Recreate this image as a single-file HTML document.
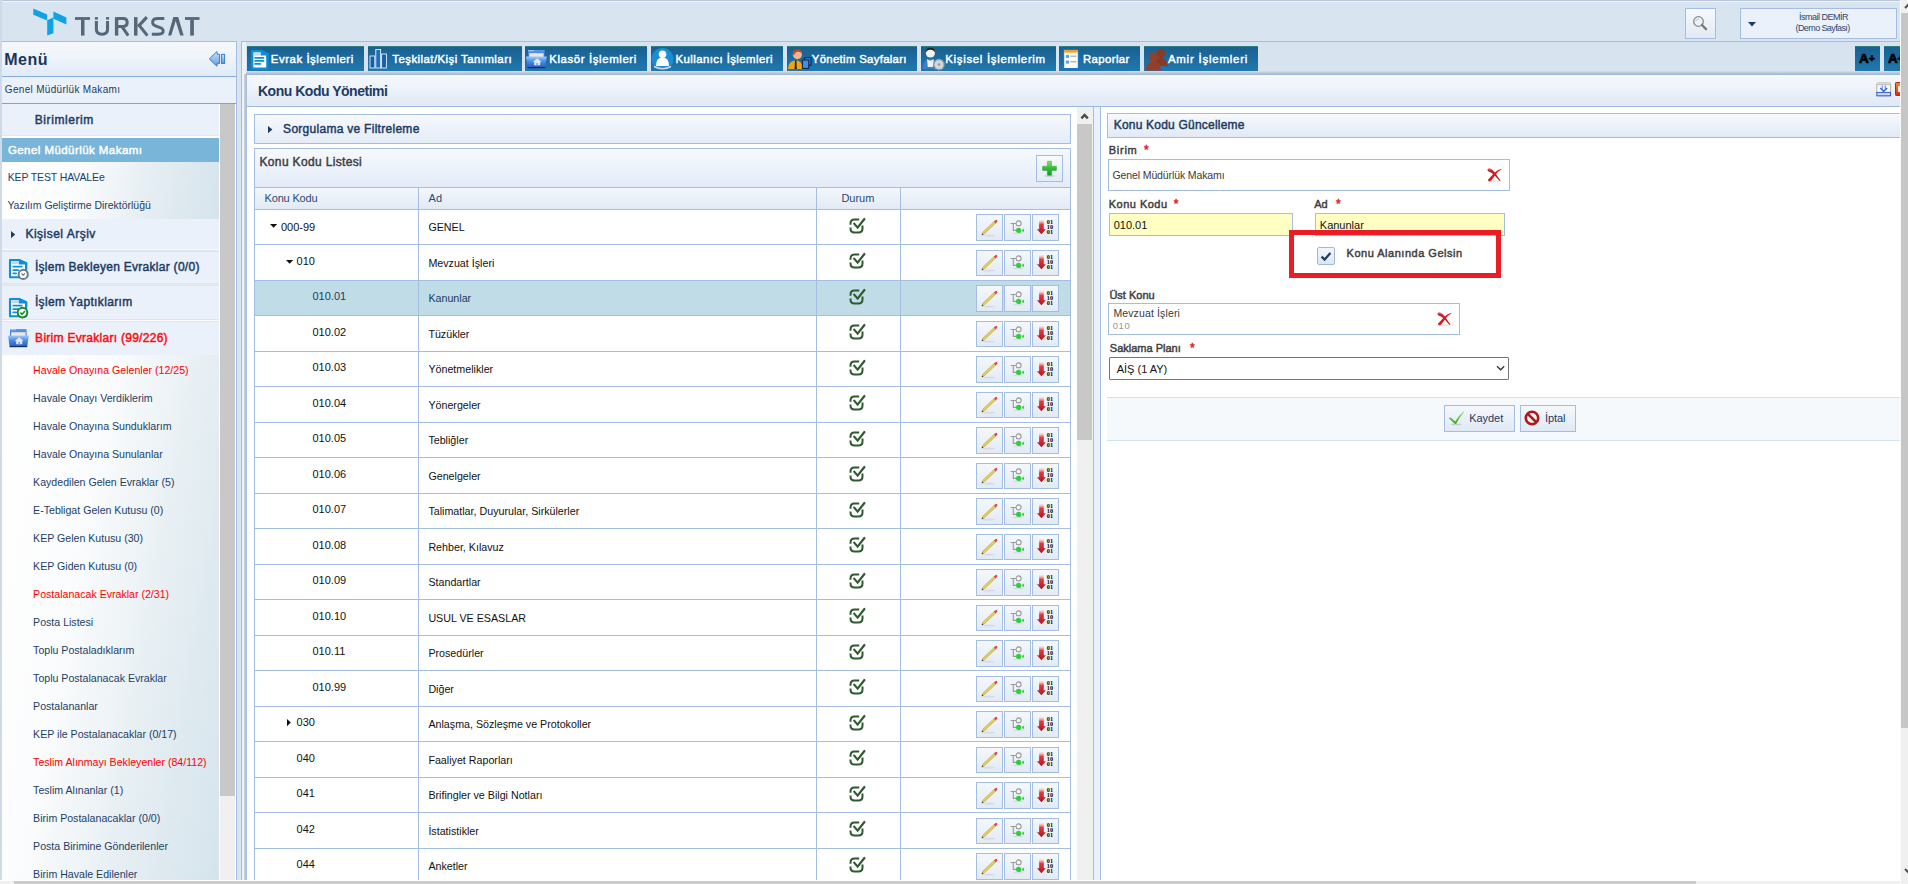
<!DOCTYPE html>
<html><head><meta charset="utf-8"><title>Konu Kodu Yönetimi</title><style>
*{box-sizing:border-box}
html,body{margin:0;padding:0}
body{width:1908px;height:884px;overflow:hidden;position:relative;background:#fff;font-family:"Liberation Sans",sans-serif}
.a{position:absolute}
.t{white-space:nowrap}
svg{overflow:visible}
</style></head><body>
<div class="a" style="left:0px;top:0px;width:1900px;height:42px;background:#d9e4f1"></div>
<div class="a" style="left:0px;top:0px;width:1900px;height:1px;background:#b9c6d9"></div>
<div class="a" style="left:0px;top:1px;width:1900px;height:1px;background:#f2f4f8"></div>
<div class="a" style="left:0px;top:41px;width:1900px;height:1px;background:#a3bde3"></div>
<svg class="a" style="left:33px;top:8px" width="34" height="28" viewBox="0 0 34 28">
<polygon points="0.3,0.6 14.2,6.6 14.2,12.6 0.3,6.8" fill="#0ea3e6"/>
<polygon points="14.2,12.2 20.4,9.6 20.4,25.2 14.2,27.6" fill="#0ea3e6"/>
<polygon points="20.4,3.6 33.4,9.4 33.4,16.6 20.4,10.8" fill="#0ea3e6"/>
</svg>
<svg class="a" style="left:0px;top:0px" width="210" height="42" viewBox="0 0 210 42"><rect x="75.0" y="17.1" width="15.00" height="2.80" fill="#566778"/><rect x="81.0" y="19.9" width="3.50" height="15.70" fill="#566778"/><rect x="94.9" y="17.1" width="3.00" height="2.50" fill="#566778"/><rect x="106.0" y="17.1" width="3.10" height="2.50" fill="#566778"/><path d="M96.4,21 V29.6 Q96.4,34.2 102.0,34.2 Q107.55,34.2 107.55,29.6 V21" stroke="#566778" stroke-width="3.05" fill="none"/><rect x="114.9" y="17.1" width="3.40" height="18.50" fill="#566778"/><path d="M118,18.5 H123.3 Q127.2,18.5 127.2,22.8 Q127.2,26.4 123.3,26.4 H118 M122.2,26.8 L128.2,35.6" stroke="#566778" stroke-width="3" fill="none"/><rect x="134.0" y="17.1" width="3.50" height="18.50" fill="#566778"/><path d="M146.8,17.1 L138,26.6 M139.2,25.4 L147.4,35.6" stroke="#566778" stroke-width="3.1" fill="none"/><path d="M164.3,18.5 H158 Q152.6,18.5 152.6,22.3 Q152.6,25 156,26.2 L160.2,27.6 Q163.2,28.6 163.2,31.1 Q163.2,34.2 158.5,34.2 H151.8" stroke="#566778" stroke-width="2.9" fill="none"/><polygon points="168.1,35.6 173.3,17.1 178.2,17.1 183.7,35.6 180.2,35.6 175.7,20.9 171.3,35.6" fill="#566778"/><rect x="185.0" y="17.1" width="14.50" height="2.80" fill="#566778"/><rect x="190.2" y="19.9" width="3.70" height="15.70" fill="#566778"/></svg>
<div class="a" style="left:1685px;top:8px;width:31px;height:31px;border:1px solid #a3bde3;background:linear-gradient(#f6f9fd,#e2eaf5)"></div>
<svg class="a" style="left:1692px;top:15px" width="17" height="17" viewBox="0 0 17 17"><circle cx="6.5" cy="6.5" r="4.8" fill="#eef3fa" stroke="#8a8a8a" stroke-width="1.3"/><path d="M7.2,4.2 Q4.6,3.9 3.6,6.3" stroke="#b8cbe6" stroke-width="1.2" fill="none"/><path d="M10,10 L14,14.2" stroke="#7a7a7a" stroke-width="2.4" stroke-linecap="round"/></svg>
<div class="a" style="left:1740px;top:8px;width:157px;height:31px;border:1px solid #a3bde3;background:#eaf1fb"></div>
<svg class="a" style="left:1748px;top:22px" width="9" height="5" viewBox="0 0 9 5"><path d="M0,0 H8 L4,4.6 Z" fill="#1d3b63"/></svg>
<span id="t1" class="a t" style="letter-spacing:-0.501px;left:1823.4px;top:12.23px;font-size:9px;line-height:11.7px;color:#2b4670;transform:translateX(-50%);">İsmail DEMİR</span>
<span id="t2" class="a t" style="letter-spacing:-0.609px;left:1822.6000000000001px;top:22.63px;font-size:9px;line-height:11.7px;color:#2b4670;transform:translateX(-50%);">(Demo Sayfası)</span>
<div class="a" style="left:0px;top:0px;width:2px;height:880px;background:#cfdae8"></div>
<div class="a" style="left:2px;top:42px;width:234px;height:34px;background:linear-gradient(#f5f9fd 0%,#eef4fb 45%,#e1eaf6 100%)"></div>
<div class="a" style="left:236px;top:41px;width:1px;height:839px;background:#a3bde3"></div>
<span id="t3" class="a t" style="letter-spacing:0.555px;left:4.2px;top:49.56px;font-size:16px;line-height:20.8px;color:#1b355c;font-weight:bold;">Menü</span>
<svg class="a" style="left:208px;top:51px" width="18" height="17" viewBox="0 0 18 17"><defs><linearGradient id="cg" x1="0" y1="0" x2="0" y2="1"><stop offset="0" stop-color="#c8e6fb"/><stop offset="1" stop-color="#5f98e0"/></linearGradient></defs><path d="M1.3,7.9 L8.8,0.6 L9.4,3.4 H11.6 V12.4 H9.4 L8.8,15.2 Z" fill="url(#cg)" stroke="#3b7ad6" stroke-width="1" stroke-linejoin="miter"/><rect x="13.6" y="3.4" width="3" height="9" fill="url(#cg)" stroke="#3b7ad6" stroke-width="1"/></svg>
<div class="a" style="left:2px;top:76px;width:234px;height:1px;background:#86acdf"></div>
<div class="a" style="left:2px;top:77px;width:234px;height:26px;background:#ebf1fa"></div>
<span id="t4" class="a t" style="letter-spacing:0.312px;left:4.8px;top:83.23px;font-size:10px;line-height:13.0px;color:#1f3a60;">Genel Müdürlük Makamı</span>
<div class="a" style="left:2px;top:103px;width:234px;height:1px;background:#7aa3dc"></div>
<div class="a" style="left:219px;top:104px;width:17px;height:776px;background:#ffffff"></div>
<div class="a" style="left:220px;top:104px;width:15px;height:776px;background:#f0f0f0"></div>
<div class="a" style="left:220px;top:104px;width:15px;height:692px;background:#c8c8c8"></div>
<div class="a" style="left:2px;top:104px;width:217px;height:31px;background:#ebf1fb"></div>
<div class="a" style="left:2px;top:135px;width:217px;height:1px;background:#e6e4f3"></div>
<span id="t5" class="a t" style="letter-spacing:0.567px;left:34.800000000000004px;top:113.24px;font-size:12px;line-height:15.6px;color:#1d3b63;-webkit-text-stroke:0.45px #1d3b63;">Birimlerim</span>
<div class="a" style="left:2px;top:136px;width:217px;height:2px;background:#ffffff"></div>
<div class="a" style="left:2px;top:138px;width:217px;height:81px;background:linear-gradient(100deg,#ffffff 0%,#fbfcfd 35%,#e4edf2 70%,#d5e4ec 100%)"></div>
<div class="a" style="left:2px;top:138px;width:217px;height:24px;background:#79b5d9"></div>
<span id="t6" class="a t" style="letter-spacing:0.439px;left:7.8999999999999995px;top:142.64px;font-size:11.5px;line-height:14.95px;color:#ffffff;-webkit-text-stroke:0.45px #ffffff;">Genel Müdürlük Makamı</span>
<span id="t7" class="a t" style="letter-spacing:-0.114px;left:7.7px;top:171.34px;font-size:10.5px;line-height:13.65px;color:#223f66;">KEP TEST HAVALEe</span>
<span id="t8" class="a t" style="letter-spacing:-0.017px;left:7.3999999999999995px;top:199.14px;font-size:10.5px;line-height:13.65px;color:#223f66;">Yazılım Geliştirme Direktörlüğü</span>
<div class="a" style="left:2px;top:219px;width:217px;height:30px;background:#ebf1fb"></div>
<svg class="a" style="left:11px;top:231px" width="5" height="8" viewBox="0 0 5 8"><path d="M0,0 L4.2,3.6 L0,7.2 Z" fill="#1d3b63"/></svg>
<span id="t9" class="a t" style="letter-spacing:0.491px;left:25.4px;top:226.64px;font-size:12px;line-height:15.6px;color:#1d3b63;-webkit-text-stroke:0.45px #1d3b63;">Kişisel Arşiv</span>
<div class="a" style="left:2px;top:249px;width:217px;height:1px;background:#fdfdff"></div>
<div class="a" style="left:2px;top:250px;width:217px;height:1.5px;background:#e3e3ef"></div>
<div class="a" style="left:2px;top:251.5px;width:217px;height:31.5px;background:#ebf1fb"></div>
<span id="t10" class="a t" style="letter-spacing:0.278px;left:34.900000000000006px;top:259.84px;font-size:12px;line-height:15.6px;color:#1d3b63;-webkit-text-stroke:0.45px #1d3b63;">İşlem Bekleyen Evraklar (0/0)</span>
<div class="a" style="left:2px;top:283px;width:217px;height:1px;background:#e4e2f1"></div>
<div class="a" style="left:2px;top:284px;width:217px;height:1px;background:#e2eaee"></div>
<div class="a" style="left:2px;top:285px;width:217px;height:1px;background:#e6e4f2"></div>
<div class="a" style="left:2px;top:286px;width:217px;height:33px;background:#ebf1fb"></div>
<span id="t11" class="a t" style="letter-spacing:0.365px;left:34.900000000000006px;top:295.04px;font-size:12px;line-height:15.6px;color:#1d3b63;-webkit-text-stroke:0.45px #1d3b63;">İşlem Yaptıklarım</span>
<div class="a" style="left:2px;top:319px;width:217px;height:1px;background:#e4e2f1"></div>
<div class="a" style="left:2px;top:320px;width:217px;height:1px;background:#fbfbfd"></div>
<div class="a" style="left:2px;top:321px;width:217px;height:1px;background:#e6e4f2"></div>
<div class="a" style="left:2px;top:322px;width:217px;height:32.5px;background:#ebf1fb"></div>
<span id="t12" class="a t" style="letter-spacing:0.281px;left:35.1px;top:330.74px;font-size:12px;line-height:15.6px;color:#ff0a0a;-webkit-text-stroke:0.45px #ff0a0a;">Birim Evrakları (99/226)</span>
<div class="a" style="left:2px;top:354.5px;width:217px;height:525.5px;background:linear-gradient(100deg,#ffffff 0%,#fbfcfd 35%,#e4edf2 70%,#d5e4ec 100%)"></div>
<svg class="a" style="left:8px;top:258px" width="22" height="23" viewBox="0 0 22 23"><path d="M2,2 H11.2 L18.1,5.2 V19.2 H2 Z" fill="#fff" stroke="#0f8fd5" stroke-width="2.1" stroke-linejoin="round"/>
<path d="M10.6,1 L19.2,4.6 V10.6 L17.2,10.6 V6.4 L10.6,6.4 Z" fill="#0f8fd5"/>
<rect x="3.4" y="3.2" width="7.4" height="3" fill="#c3d6ee"/>
<rect x="4.4" y="7.8" width="10.2" height="1.8" rx="0.8" fill="#0f8fd5"/><rect x="4.4" y="11.2" width="6.8" height="1.8" rx="0.8" fill="#0f8fd5"/><rect x="4.4" y="14.4" width="4.6" height="1.8" rx="0.8" fill="#0f8fd5"/><circle cx="15.2" cy="16.4" r="4.6" fill="#fff" stroke="#6b7b85" stroke-width="2"/><path d="M13.4,15.4 L15.2,17.1 L17,15.4" stroke="#6b7b85" stroke-width="1.3" fill="none"/></svg>
<svg class="a" style="left:7.5px;top:296.5px" width="22" height="23" viewBox="0 0 22 23"><path d="M2,2 H11.2 L18.1,5.2 V19.2 H2 Z" fill="#fff" stroke="#0f8fd5" stroke-width="2.1" stroke-linejoin="round"/>
<path d="M10.6,1 L19.2,4.6 V10.6 L17.2,10.6 V6.4 L10.6,6.4 Z" fill="#0f8fd5"/>
<rect x="3.4" y="3.2" width="7.4" height="3" fill="#c3d6ee"/>
<rect x="4.4" y="7.8" width="10.2" height="1.8" rx="0.8" fill="#0f8fd5"/><rect x="4.4" y="11.2" width="6.8" height="1.8" rx="0.8" fill="#0f8fd5"/><rect x="4.4" y="14.4" width="4.6" height="1.8" rx="0.8" fill="#0f8fd5"/><circle cx="14.5" cy="15.6" r="4.8" fill="#fff" stroke="#1a8a2e" stroke-width="2"/><path d="M12.4,15.6 L14.1,17.4 L16.9,14" stroke="#1a8a2e" stroke-width="1.6" fill="none"/></svg>
<svg class="a" style="left:8px;top:327.6px" width="22" height="20" viewBox="0 0 22 20"><defs><linearGradient id="fgb2" x1="0" y1="0" x2="0" y2="1"><stop offset="0" stop-color="#5c9cf0"/><stop offset="1" stop-color="#2f6cd0"/></linearGradient><linearGradient id="fgf2" x1="0" y1="0" x2="0" y2="1"><stop offset="0" stop-color="#9cc8ff"/><stop offset="0.45" stop-color="#4a8ce8"/><stop offset="1" stop-color="#2a5cc0"/></linearGradient></defs><rect x="2" y="1" width="16.6" height="8" fill="url(#fgb2)"/><rect x="2.4" y="1.2" width="5.5" height="1" fill="#a8ccf8"/><rect x="3.2" y="4.2" width="14.4" height="4.6" fill="#efe8da"/><path d="M0,7.6 H20.8 L19.2,18.4 H1.6 Z" fill="url(#fgf2)"/><rect x="1.6" y="18" width="17.6" height="1.2" fill="#10306a"/><path d="M11.2,9.2 L15.6,13 H14.2 V16.2 H8.2 V13 H6.8 Z" fill="#dce9fb"/><rect x="10.4" y="14" width="1.6" height="2.2" fill="#6a9ee8"/></svg>
<span id="t13" class="a t" style="left:33.1px;top:364.44px;font-size:10.6px;line-height:13.78px;color:#ff0000;">Havale Onayına Gelenler (12/25)</span>
<span id="t14" class="a t" style="left:33.1px;top:392.44px;font-size:10.6px;line-height:13.78px;color:#223f66;">Havale Onayı Verdiklerim</span>
<span id="t15" class="a t" style="left:33.1px;top:420.44px;font-size:10.6px;line-height:13.78px;color:#223f66;">Havale Onayına Sunduklarım</span>
<span id="t16" class="a t" style="left:33.1px;top:448.44px;font-size:10.6px;line-height:13.78px;color:#223f66;">Havale Onayına Sunulanlar</span>
<span id="t17" class="a t" style="left:33.1px;top:476.44px;font-size:10.6px;line-height:13.78px;color:#223f66;">Kaydedilen Gelen Evraklar (5)</span>
<span id="t18" class="a t" style="left:33.1px;top:504.44px;font-size:10.6px;line-height:13.78px;color:#223f66;">E-Tebligat Gelen Kutusu (0)</span>
<span id="t19" class="a t" style="left:33.1px;top:532.44px;font-size:10.6px;line-height:13.78px;color:#223f66;">KEP Gelen Kutusu (30)</span>
<span id="t20" class="a t" style="left:33.1px;top:560.44px;font-size:10.6px;line-height:13.78px;color:#223f66;">KEP Giden Kutusu (0)</span>
<span id="t21" class="a t" style="left:33.1px;top:588.44px;font-size:10.6px;line-height:13.78px;color:#ff0000;">Postalanacak Evraklar (2/31)</span>
<span id="t22" class="a t" style="left:33.1px;top:616.44px;font-size:10.6px;line-height:13.78px;color:#223f66;">Posta Listesi</span>
<span id="t23" class="a t" style="left:33.1px;top:644.44px;font-size:10.6px;line-height:13.78px;color:#223f66;">Toplu Postaladıklarım</span>
<span id="t24" class="a t" style="left:33.1px;top:672.44px;font-size:10.6px;line-height:13.78px;color:#223f66;">Toplu Postalanacak Evraklar</span>
<span id="t25" class="a t" style="left:33.1px;top:700.44px;font-size:10.6px;line-height:13.78px;color:#223f66;">Postalananlar</span>
<span id="t26" class="a t" style="left:33.1px;top:728.44px;font-size:10.6px;line-height:13.78px;color:#223f66;">KEP ile Postalanacaklar (0/17)</span>
<span id="t27" class="a t" style="left:33.1px;top:756.44px;font-size:10.6px;line-height:13.78px;color:#ff0000;">Teslim Alınmayı Bekleyenler (84/112)</span>
<span id="t28" class="a t" style="left:33.1px;top:784.44px;font-size:10.6px;line-height:13.78px;color:#223f66;">Teslim Alınanlar (1)</span>
<span id="t29" class="a t" style="left:33.1px;top:812.44px;font-size:10.6px;line-height:13.78px;color:#223f66;">Birim Postalanacaklar (0/0)</span>
<span id="t30" class="a t" style="left:33.1px;top:840.44px;font-size:10.6px;line-height:13.78px;color:#223f66;">Posta Birimine Gönderilenler</span>
<span id="t31" class="a t" style="left:33.1px;top:868.44px;font-size:10.6px;line-height:13.78px;color:#223f66;">Birim Havale Edilenler</span>
<div class="a" style="left:237px;top:41px;width:4px;height:839px;background:#d9e4f1"></div>
<div class="a" style="left:241px;top:41px;width:1px;height:839px;background:#a3bde3"></div>
<div class="a" style="left:242px;top:42px;width:1658px;height:29px;background:#d8e3f0"></div>
<div class="a" style="left:242px;top:42px;width:4px;height:838px;background:#edf2f8"></div>
<div class="a" style="left:246px;top:71px;width:1654px;height:3px;background:linear-gradient(#dcdee4,#b2bac6)"></div>
<div class="a" style="left:247px;top:74px;width:1653px;height:1px;background:#a0bbe0"></div>
<div class="a" style="left:244px;top:74px;width:2px;height:806px;background:linear-gradient(90deg,#d4d8de,#b4bac4)"></div>
<div class="a" style="left:246px;top:74px;width:1px;height:806px;background:#a8c0e0"></div>
<div class="a" style="left:246.5px;top:45.5px;width:117.5px;height:25.3px;background:linear-gradient(#1a5f90,#1f79ae);border-top:1px solid #2f7f86"></div>
<span id="t32" class="a t" style="letter-spacing:0.554px;left:270.8px;top:51.54px;font-size:11.4px;line-height:14.82px;color:#ffffff;-webkit-text-stroke:0.45px #ffffff;">Evrak İşlemleri</span>
<div class="a" style="left:367.7px;top:45.5px;width:154.3px;height:25.3px;background:linear-gradient(#1a5f90,#1f79ae);border-top:1px solid #2f7f86"></div>
<span id="t33" class="a t" style="letter-spacing:0.452px;left:392.3px;top:51.54px;font-size:11.4px;line-height:14.82px;color:#ffffff;-webkit-text-stroke:0.45px #ffffff;">Teşkilat/Kişi Tanımları</span>
<div class="a" style="left:524.5px;top:45.5px;width:122.5px;height:25.3px;background:linear-gradient(#1a5f90,#1f79ae);border-top:1px solid #2f7f86"></div>
<span id="t34" class="a t" style="letter-spacing:0.615px;left:549.2px;top:51.54px;font-size:11.4px;line-height:14.82px;color:#ffffff;-webkit-text-stroke:0.45px #ffffff;">Klasör İşlemleri</span>
<div class="a" style="left:650.8px;top:45.5px;width:132.6px;height:25.3px;background:linear-gradient(#1a5f90,#1f79ae);border-top:1px solid #2f7f86"></div>
<span id="t35" class="a t" style="letter-spacing:0.439px;left:675.4000000000001px;top:51.54px;font-size:11.4px;line-height:14.82px;color:#ffffff;-webkit-text-stroke:0.45px #ffffff;">Kullanıcı İşlemleri</span>
<div class="a" style="left:786.8px;top:45.5px;width:130.2px;height:25.3px;background:linear-gradient(#1a5f90,#1f79ae);border-top:1px solid #2f7f86"></div>
<span id="t36" class="a t" style="letter-spacing:0.300px;left:811.8000000000001px;top:51.54px;font-size:11.4px;line-height:14.82px;color:#ffffff;-webkit-text-stroke:0.45px #ffffff;">Yönetim Sayfaları</span>
<div class="a" style="left:920.8px;top:45.5px;width:135.2px;height:25.3px;background:linear-gradient(#1a5f90,#1f79ae);border-top:1px solid #2f7f86"></div>
<span id="t37" class="a t" style="letter-spacing:0.695px;left:945.3000000000001px;top:51.54px;font-size:11.4px;line-height:14.82px;color:#ffffff;-webkit-text-stroke:0.45px #ffffff;">Kişisel İşlemlerim</span>
<div class="a" style="left:1059px;top:45.5px;width:81px;height:25.3px;background:linear-gradient(#1a5f90,#1f79ae);border-top:1px solid #2f7f86"></div>
<span id="t38" class="a t" style="letter-spacing:0.377px;left:1083.0px;top:51.54px;font-size:11.4px;line-height:14.82px;color:#ffffff;-webkit-text-stroke:0.45px #ffffff;">Raporlar</span>
<div class="a" style="left:1143.6px;top:45.5px;width:114.4px;height:25.3px;background:linear-gradient(#1a5f90,#1f79ae);border-top:1px solid #2f7f86"></div>
<span id="t39" class="a t" style="letter-spacing:0.808px;left:1167.8999999999999px;top:51.54px;font-size:11.4px;line-height:14.82px;color:#ffffff;-webkit-text-stroke:0.45px #ffffff;">Amir İşlemleri</span>
<svg class="a" style="left:249.5px;top:48.5px" width="20" height="22" viewBox="0 0 20 22"><path d="M2.2,2.2 H11.4 L17.4,5 V18.6 Q17.4,19.6 16.4,19.6 H3.2 Q2.2,19.6 2.2,18.6 Z" fill="#fff" stroke="#0d8fd8" stroke-width="2.4" stroke-linejoin="round"/><path d="M10.6,0.9 L18.7,4.2 V9.2 L16.2,9.2 V6.4 L10.6,6.4 Z" fill="#0d8fd8"/><rect x="3.4" y="3.4" width="7.2" height="3.2" fill="#c6d8ee"/><rect x="4.2" y="8" width="10.2" height="1.8" rx="0.9" fill="#0d8fd8"/><rect x="4.2" y="11" width="10.2" height="1.8" rx="0.9" fill="#0d8fd8"/><rect x="4.2" y="14" width="7" height="1.8" rx="0.9" fill="#0d8fd8"/></svg>
<svg class="a" style="left:369px;top:48px" width="19" height="21" viewBox="0 0 19 21"><rect x="1" y="8" width="4.8" height="12" fill="#1460a8" stroke="#e8eef6" stroke-width="0.9"/><rect x="6.8" y="1.5" width="4.8" height="18.5" fill="#1a6fc0" stroke="#e8eef6" stroke-width="0.9"/><rect x="12.6" y="6" width="4.8" height="14" fill="#1460a8" stroke="#e8eef6" stroke-width="0.9"/></svg>
<svg class="a" style="left:526px;top:49.2px" width="22" height="20" viewBox="0 0 22 20"><defs><linearGradient id="fgb" x1="0" y1="0" x2="0" y2="1"><stop offset="0" stop-color="#5c9cf0"/><stop offset="1" stop-color="#2f6cd0"/></linearGradient><linearGradient id="fgf" x1="0" y1="0" x2="0" y2="1"><stop offset="0" stop-color="#9cc8ff"/><stop offset="0.45" stop-color="#4a8ce8"/><stop offset="1" stop-color="#2a5cc0"/></linearGradient></defs><rect x="2" y="1" width="16.6" height="8" fill="url(#fgb)"/><rect x="2.4" y="1.2" width="5.5" height="1" fill="#a8ccf8"/><rect x="3.2" y="4.2" width="14.4" height="4.6" fill="#efe8da"/><path d="M0,7.6 H20.8 L19.2,18.4 H1.6 Z" fill="url(#fgf)"/><rect x="1.6" y="18" width="17.6" height="1.2" fill="#10306a"/><path d="M11.2,9.2 L15.6,13 H14.2 V16.2 H8.2 V13 H6.8 Z" fill="#dce9fb"/><rect x="10.4" y="14" width="1.6" height="2.2" fill="#6a9ee8"/></svg>
<svg class="a" style="left:651px;top:48px" width="24" height="23" viewBox="0 0 24 23"><circle cx="11.5" cy="11" r="11" fill="#1a8ed0"/><circle cx="11.5" cy="6.2" r="3.8" fill="#fff"/><path d="M5,18 Q5,9.6 11.5,9.6 Q18,9.6 18,18 Z" fill="#fff"/><path d="M3,18.5 Q11.5,23 20,18.5" stroke="#cfd8df" stroke-width="1.6" fill="none"/></svg>
<svg class="a" style="left:787px;top:48px" width="25" height="23" viewBox="0 0 25 23"><path d="M1,21 Q1.4,12.6 8.6,12.4 Q15.6,12.6 16,21 Z" fill="#f0a414"/><path d="M8,12.6 H9.4 L9.8,21 H7.6 Z" fill="#222"/><circle cx="10.4" cy="6.6" r="4.6" fill="#f2b48e"/><path d="M5.8,6 Q5.8,1.4 10.4,1.4 Q15,1.4 15.2,5.4 Q13.4,3.6 11,3.8 Q8,4 7,7.6 Z" fill="#c8481e"/><rect x="17.6" y="9.6" width="6.4" height="7.6" fill="#2d7fd4" stroke="#0c2040" stroke-width="1"/><rect x="15.4" y="12" width="6.4" height="8.4" fill="#3b90e6" stroke="#0c2040" stroke-width="1"/></svg>
<svg class="a" style="left:922px;top:47px" width="25" height="24" viewBox="0 0 25 24"><circle cx="8.4" cy="6" r="4.6" fill="#f2f2f2"/><path d="M3.8,5.2 Q4,0.8 8.4,0.8 Q12.8,0.8 13,5.2 Q11,2.6 8.4,2.8 Q5.8,2.6 3.8,5.2 Z" fill="#222"/><path d="M0.5,22 Q0.8,11.8 8.4,11.6 Q15.8,11.8 16,22 Z" fill="#3b7fc8"/><path d="M5,12 Q8.4,15 11.8,12 L11,20 H5.8 Z" fill="#f0f0f0"/><circle cx="17" cy="17.6" r="5" fill="#d4d8dc" stroke="#9aa0a8" stroke-width="1.6" stroke-dasharray="1.6 1"/><circle cx="17" cy="17.6" r="1.4" fill="#9aa0a8"/></svg>
<svg class="a" style="left:1062px;top:48px" width="18" height="22" viewBox="0 0 18 22"><path d="M1,0.8 H14 L17,3.8 V21 H1 Z" fill="#1c74c8"/><rect x="2.2" y="2" width="13.6" height="18" fill="#fdfaf0"/><rect x="2.2" y="2" width="13.6" height="2.6" fill="#f3a12c"/><rect x="4" y="7" width="3" height="3" fill="#5aa0e8"/><rect x="8.4" y="7.6" width="6" height="1.2" fill="#9ab"/><rect x="4" y="12.6" width="3" height="3" fill="#5aa0e8"/><rect x="8.4" y="13.2" width="6" height="1.2" fill="#9ab"/></svg>
<svg class="a" style="left:1145px;top:48px" width="24" height="23" viewBox="0 0 24 23"><circle cx="15.6" cy="5.4" r="4.4" fill="#8a3a22"/><path d="M9,18 Q9.4,10.2 15.6,10 Q22,10.2 22.3,18 Z" fill="#8a3a22"/><circle cx="8.4" cy="9" r="4.6" fill="#93402a"/><path d="M0.8,22.5 Q1,13.8 8.4,13.6 Q15.8,13.8 16,22.5 Z" fill="#93402a"/></svg>
<div class="a" style="left:1854.8px;top:45.5px;width:25.2px;height:25.3px;background:linear-gradient(#1a5f90,#1f79ae);border-top:1px solid #2f7f86"></div>
<span id="t40" class="a t" style="left:1859.1000000000001px;top:50.35px;font-size:13.5px;line-height:17.55px;color:#000;font-weight:bold;-webkit-text-stroke:0.7px #000">A</span>
<span id="t41" class="a t" style="left:1868.8px;top:52.34px;font-size:10.5px;line-height:13.65px;color:#000;font-weight:bold;-webkit-text-stroke:0.6px #000">+</span>
<div class="a" style="left:1883.7px;top:45.5px;width:17px;height:25.3px;background:linear-gradient(#1a5f90,#1f79ae);border-top:1px solid #2f7f86"></div>
<span id="t42" class="a t" style="left:1887.9px;top:50.35px;font-size:13.5px;line-height:17.55px;color:#000;font-weight:bold;-webkit-text-stroke:0.7px #000">A</span>
<span id="t43" class="a t" style="left:1897.6000000000001px;top:52.34px;font-size:10.5px;line-height:13.65px;color:#000;font-weight:bold;-webkit-text-stroke:0.6px #000">+</span>
<div class="a" style="left:247px;top:75px;width:1653px;height:31px;background:linear-gradient(#f6f9fd 0%,#eff4fb 40%,#e4ecf7 75%,#e2eaf6 100%)"></div>
<span id="t44" class="a t" style="letter-spacing:-0.488px;left:258.0px;top:82.05px;font-size:14px;line-height:18.2px;color:#1d3b63;font-weight:bold;">Konu Kodu Yönetimi</span>
<div class="a" style="left:247px;top:106px;width:1653px;height:1px;background:#9cb8de"></div>
<div class="a" style="left:247px;top:107px;width:1653px;height:773px;background:#ffffff"></div>
<svg class="a" style="left:1876px;top:82px" width="16" height="15" viewBox="0 0 16 15"><defs><linearGradient id="xg" x1="0" y1="0" x2="0" y2="1"><stop offset="0" stop-color="#e8e8e8"/><stop offset="1" stop-color="#b8b8b8"/></linearGradient></defs><rect x="0.8" y="0.8" width="13.8" height="13" rx="1.2" fill="#fafafa" stroke="#a8a8a8" stroke-width="0.9"/><rect x="0.8" y="0.8" width="13.8" height="2.4" rx="1" fill="url(#xg)"/><path d="M6.2,3.6 V7.6 M9.2,3.6 V7.6" stroke="#3a6ee0" stroke-width="0.9"/><path d="M4.2,6 L7.7,9.4 L11.2,6" stroke="#3a6ee0" stroke-width="1.5" fill="none"/><rect x="0.9" y="10.4" width="13.6" height="3.4" fill="#c8d6f8" stroke="#2d5ed8" stroke-width="1"/></svg>
<div class="a" style="left:1895.2px;top:82px;width:4.8px;height:13.8px;background:linear-gradient(#f4902c,#d8281a);border-radius:2px 0 0 2px;border:0.6px solid #c02010;border-right:none"></div>
<div class="a" style="left:1898.4px;top:86px;width:1.6px;height:6px;background:#fbe6c8"></div>
<div class="a" style="left:254px;top:114px;width:817px;height:30px;border:1px solid #a3bde3;background:linear-gradient(#f6f9fd,#e4ecf7)"></div>
<svg class="a" style="left:268px;top:126px" width="5" height="8" viewBox="0 0 5 8"><path d="M0,0 L4.4,3.6 L0,7.2 Z" fill="#1d3b63"/></svg>
<span id="t45" class="a t" style="letter-spacing:0.280px;left:283.09999999999997px;top:121.94px;font-size:12px;line-height:15.6px;color:#1d3b63;-webkit-text-stroke:0.45px #1d3b63;">Sorgulama ve Filtreleme</span>
<div class="a" style="left:254px;top:148px;width:817px;height:740px;border:1px solid #a3bde3;background:#fff"></div>
<div class="a" style="left:255px;top:149px;width:815px;height:38px;background:linear-gradient(#f6f9fd 0%,#eef3fb 45%,#e3ebf6 100%)"></div>
<span id="t46" class="a t" style="letter-spacing:0.345px;left:259.5px;top:154.74px;font-size:12px;line-height:15.6px;color:#404040;-webkit-text-stroke:0.45px #404040;">Konu Kodu Listesi</span>
<div class="a" style="left:1036px;top:155px;width:27px;height:27px;border:1px solid #a3bde3;background:linear-gradient(#f6f9fd,#e3ebf6)"></div>
<svg class="a" style="left:1039.5px;top:158.5px" width="20" height="20" viewBox="0 0 20 20"><defs><linearGradient id="plg" x1="0" y1="0" x2="0" y2="1"><stop offset="0" stop-color="#7ee07e"/><stop offset="0.5" stop-color="#2fbf35"/><stop offset="1" stop-color="#169a1e"/></linearGradient></defs>
<ellipse cx="9.5" cy="16.9" rx="5" ry="0.9" fill="#000" opacity="0.15"/>
<path d="M7.4,2.8 Q7.4,2.3 7.9,2.3 H11.1 Q11.6,2.3 11.6,2.8 V7.2 H16 Q16.5,7.2 16.5,7.7 V10.9 Q16.5,11.4 16,11.4 H11.6 V15.8 Q11.6,16.3 11.1,16.3 H7.9 Q7.4,16.3 7.4,15.8 V11.4 H3 Q2.5,11.4 2.5,10.9 V7.7 Q2.5,7.2 3,7.2 H7.4 Z" fill="url(#plg)" stroke="#1f8f25" stroke-width="0.4"/></svg>
<div class="a" style="left:255px;top:187px;width:815px;height:1px;background:#a3bde3"></div>
<div class="a" style="left:255px;top:188px;width:815px;height:21px;background:linear-gradient(#f3f7fc,#e2eaf5)"></div>
<div class="a" style="left:255px;top:209px;width:815px;height:1px;background:#a3bde3"></div>
<div class="a" style="left:418px;top:187px;width:1px;height:693px;background:#a3bde3"></div>
<div class="a" style="left:816px;top:187px;width:1px;height:693px;background:#a3bde3"></div>
<div class="a" style="left:900px;top:187px;width:1px;height:693px;background:#a3bde3"></div>
<span id="t47" class="a t" style="letter-spacing:-0.160px;left:264.5px;top:191.04px;font-size:11px;line-height:14.3px;color:#2b4a72;">Konu Kodu</span>
<span id="t48" class="a t" style="left:428.59999999999997px;top:191.04px;font-size:11px;line-height:14.3px;color:#2b4a72;">Ad</span>
<span id="t49" class="a t" style="left:857.9000000000001px;top:191.04px;font-size:11px;line-height:14.3px;color:#2b4a72;transform:translateX(-50%);">Durum</span>
<div class="a" style="left:255px;top:244px;width:815px;height:1px;background:#a3bde3"></div>
<span id="t50" class="a t" style="left:280.9px;top:220.34px;font-size:11px;line-height:14.3px;color:#111;">000-99</span>
<span id="t51" class="a t" style="left:428.4px;top:221.34px;font-size:10.7px;line-height:13.91px;color:#111;">GENEL</span>
<svg class="a" style="left:270px;top:224.0px" width="8" height="4" viewBox="0 0 8 4"><path d="M0,0 H7.2 L3.6,3.8 Z" fill="#111"/></svg>
<svg class="a" style="left:849.2px;top:217.8px" width="17" height="16" viewBox="0 0 17 16"><path d="M1.5,6.8 V5.5 Q1.5,1.5 5.5,1.5 H10.2 M13.5,7.5 V10.5 Q13.5,14.5 9.5,14.5 H5.5 Q1.5,14.5 1.5,10.5 V9.5" stroke="#2d5a2f" stroke-width="2" fill="none"/>
<path d="M5.2,5.6 L8.6,9.6 L15.4,1" stroke="#2d5a2f" stroke-width="2.2" fill="none" stroke-linecap="round"/></svg>
<div class="a" style="left:976.2px;top:214.3px;width:26.6px;height:26.6px;border:1px solid #a3bde3;background:linear-gradient(#f4f8fc,#e2eaf5)"></div>
<div class="a" style="left:1004.2px;top:214.3px;width:26.6px;height:26.6px;border:1px solid #a3bde3;background:linear-gradient(#f4f8fc,#e2eaf5)"></div>
<div class="a" style="left:1032.2px;top:214.3px;width:26.6px;height:26.6px;border:1px solid #a3bde3;background:linear-gradient(#f4f8fc,#e2eaf5)"></div>
<svg class="a" style="left:977.5px;top:215.5px" width="24" height="24" viewBox="0 0 24 24"><defs><linearGradient id="pg" x1="0" y1="0" x2="1" y2="1"><stop offset="0" stop-color="#f8ec8c"/><stop offset="1" stop-color="#d0b030"/></linearGradient></defs>
<ellipse cx="10.5" cy="19.6" rx="7" ry="1" fill="#000" opacity="0.07"/>
<path d="M3.8,19 L5,16 L16.4,5.2 L18,6.8 L6.6,17.6 Z" fill="url(#pg)" stroke="#b09020" stroke-width="0.5"/>
<path d="M3.8,19 L4.4,17.4 L5.4,18.4 Z" fill="#111"/>
<path d="M16,5.6 L17.4,4.2 Q18.6,3.4 19.2,4.4 Q19.8,5.4 18.8,6.2 L17.4,7.6 Z" fill="#e8414a"/></svg>
<svg class="a" style="left:1005.5px;top:217.8px" width="24" height="24" viewBox="0 0 24 24"><path d="M4.6,5.5 H10 M7.3,5.5 V12.4 H10.5" stroke="#9a9a9a" stroke-width="1.1" fill="none"/>
<circle cx="12.6" cy="5.4" r="2.5" fill="#f4f4f4" stroke="#9a9a9a" stroke-width="1.1"/>
<ellipse cx="12" cy="15.4" rx="5" ry="0.9" fill="#000" opacity="0.07"/>
<circle cx="12.6" cy="12.4" r="2.7" fill="#2fcf3a"/>
<path d="M17.6,11 L16,12.4 L17.6,13.8 Z" fill="#2fbf3a" stroke="#2fbf3a" stroke-width="0.6"/></svg>
<svg class="a" style="left:1032px;top:214.6px" width="24" height="24" viewBox="0 0 24 24"><defs><linearGradient id="eg" x1="0" y1="0" x2="0" y2="1"><stop offset="0" stop-color="#fff" stop-opacity="0.3"/><stop offset="0.35" stop-color="#e23b40"/><stop offset="1" stop-color="#b0141a"/></linearGradient></defs>
<path d="M7.1,4 H11.8 V14.3 H13.9 L9.4,19.2 L4.9,14.3 H7.1 Z" fill="url(#eg)"/>
<text x="14.8" y="9.4" font-family="Liberation Serif" font-weight="bold" font-size="6.2" fill="#000">01</text>
<text x="14.8" y="14.4" font-family="Liberation Serif" font-weight="bold" font-size="6.2" fill="#000">10</text>
<text x="14.8" y="19.3" font-family="Liberation Serif" font-weight="bold" font-size="6.2" fill="#000">01</text></svg>
<div class="a" style="left:255px;top:280px;width:815px;height:1px;background:#a3bde3"></div>
<span id="t52" class="a t" style="left:296.59999999999997px;top:253.84px;font-size:11px;line-height:14.3px;color:#111;">010</span>
<span id="t53" class="a t" style="left:428.4px;top:256.84px;font-size:10.7px;line-height:13.91px;color:#111;">Mevzuat İşleri</span>
<svg class="a" style="left:286.2px;top:259.5px" width="8" height="4" viewBox="0 0 8 4"><path d="M0,0 H7.2 L3.6,3.8 Z" fill="#111"/></svg>
<svg class="a" style="left:849.2px;top:253.3px" width="17" height="16" viewBox="0 0 17 16"><path d="M1.5,6.8 V5.5 Q1.5,1.5 5.5,1.5 H10.2 M13.5,7.5 V10.5 Q13.5,14.5 9.5,14.5 H5.5 Q1.5,14.5 1.5,10.5 V9.5" stroke="#2d5a2f" stroke-width="2" fill="none"/>
<path d="M5.2,5.6 L8.6,9.6 L15.4,1" stroke="#2d5a2f" stroke-width="2.2" fill="none" stroke-linecap="round"/></svg>
<div class="a" style="left:976.2px;top:249.8px;width:26.6px;height:26.6px;border:1px solid #a3bde3;background:linear-gradient(#f4f8fc,#e2eaf5)"></div>
<div class="a" style="left:1004.2px;top:249.8px;width:26.6px;height:26.6px;border:1px solid #a3bde3;background:linear-gradient(#f4f8fc,#e2eaf5)"></div>
<div class="a" style="left:1032.2px;top:249.8px;width:26.6px;height:26.6px;border:1px solid #a3bde3;background:linear-gradient(#f4f8fc,#e2eaf5)"></div>
<svg class="a" style="left:977.5px;top:251.0px" width="24" height="24" viewBox="0 0 24 24"><defs><linearGradient id="pg" x1="0" y1="0" x2="1" y2="1"><stop offset="0" stop-color="#f8ec8c"/><stop offset="1" stop-color="#d0b030"/></linearGradient></defs>
<ellipse cx="10.5" cy="19.6" rx="7" ry="1" fill="#000" opacity="0.07"/>
<path d="M3.8,19 L5,16 L16.4,5.2 L18,6.8 L6.6,17.6 Z" fill="url(#pg)" stroke="#b09020" stroke-width="0.5"/>
<path d="M3.8,19 L4.4,17.4 L5.4,18.4 Z" fill="#111"/>
<path d="M16,5.6 L17.4,4.2 Q18.6,3.4 19.2,4.4 Q19.8,5.4 18.8,6.2 L17.4,7.6 Z" fill="#e8414a"/></svg>
<svg class="a" style="left:1005.5px;top:253.3px" width="24" height="24" viewBox="0 0 24 24"><path d="M4.6,5.5 H10 M7.3,5.5 V12.4 H10.5" stroke="#9a9a9a" stroke-width="1.1" fill="none"/>
<circle cx="12.6" cy="5.4" r="2.5" fill="#f4f4f4" stroke="#9a9a9a" stroke-width="1.1"/>
<ellipse cx="12" cy="15.4" rx="5" ry="0.9" fill="#000" opacity="0.07"/>
<circle cx="12.6" cy="12.4" r="2.7" fill="#2fcf3a"/>
<path d="M17.6,11 L16,12.4 L17.6,13.8 Z" fill="#2fbf3a" stroke="#2fbf3a" stroke-width="0.6"/></svg>
<svg class="a" style="left:1032px;top:250.1px" width="24" height="24" viewBox="0 0 24 24"><defs><linearGradient id="eg" x1="0" y1="0" x2="0" y2="1"><stop offset="0" stop-color="#fff" stop-opacity="0.3"/><stop offset="0.35" stop-color="#e23b40"/><stop offset="1" stop-color="#b0141a"/></linearGradient></defs>
<path d="M7.1,4 H11.8 V14.3 H13.9 L9.4,19.2 L4.9,14.3 H7.1 Z" fill="url(#eg)"/>
<text x="14.8" y="9.4" font-family="Liberation Serif" font-weight="bold" font-size="6.2" fill="#000">01</text>
<text x="14.8" y="14.4" font-family="Liberation Serif" font-weight="bold" font-size="6.2" fill="#000">10</text>
<text x="14.8" y="19.3" font-family="Liberation Serif" font-weight="bold" font-size="6.2" fill="#000">01</text></svg>
<div class="a" style="left:255px;top:281px;width:815px;height:34px;background:#c0dde7"></div>
<div class="a" style="left:255px;top:315px;width:815px;height:1px;background:#a3bde3"></div>
<span id="t54" class="a t" style="left:312.5px;top:289.34px;font-size:11px;line-height:14.3px;color:#1d3b63;">010.01</span>
<span id="t55" class="a t" style="left:428.4px;top:292.34px;font-size:10.7px;line-height:13.91px;color:#1d3b63;">Kanunlar</span>
<svg class="a" style="left:849.2px;top:288.8px" width="17" height="16" viewBox="0 0 17 16"><path d="M1.5,6.8 V5.5 Q1.5,1.5 5.5,1.5 H10.2 M13.5,7.5 V10.5 Q13.5,14.5 9.5,14.5 H5.5 Q1.5,14.5 1.5,10.5 V9.5" stroke="#2d5a2f" stroke-width="2" fill="none"/>
<path d="M5.2,5.6 L8.6,9.6 L15.4,1" stroke="#2d5a2f" stroke-width="2.2" fill="none" stroke-linecap="round"/></svg>
<div class="a" style="left:976.2px;top:285.3px;width:26.6px;height:26.6px;border:1px solid #a3bde3;background:linear-gradient(#f4f8fc,#e2eaf5)"></div>
<div class="a" style="left:1004.2px;top:285.3px;width:26.6px;height:26.6px;border:1px solid #a3bde3;background:linear-gradient(#f4f8fc,#e2eaf5)"></div>
<div class="a" style="left:1032.2px;top:285.3px;width:26.6px;height:26.6px;border:1px solid #a3bde3;background:linear-gradient(#f4f8fc,#e2eaf5)"></div>
<svg class="a" style="left:977.5px;top:286.5px" width="24" height="24" viewBox="0 0 24 24"><defs><linearGradient id="pg" x1="0" y1="0" x2="1" y2="1"><stop offset="0" stop-color="#f8ec8c"/><stop offset="1" stop-color="#d0b030"/></linearGradient></defs>
<ellipse cx="10.5" cy="19.6" rx="7" ry="1" fill="#000" opacity="0.07"/>
<path d="M3.8,19 L5,16 L16.4,5.2 L18,6.8 L6.6,17.6 Z" fill="url(#pg)" stroke="#b09020" stroke-width="0.5"/>
<path d="M3.8,19 L4.4,17.4 L5.4,18.4 Z" fill="#111"/>
<path d="M16,5.6 L17.4,4.2 Q18.6,3.4 19.2,4.4 Q19.8,5.4 18.8,6.2 L17.4,7.6 Z" fill="#e8414a"/></svg>
<svg class="a" style="left:1005.5px;top:288.8px" width="24" height="24" viewBox="0 0 24 24"><path d="M4.6,5.5 H10 M7.3,5.5 V12.4 H10.5" stroke="#9a9a9a" stroke-width="1.1" fill="none"/>
<circle cx="12.6" cy="5.4" r="2.5" fill="#f4f4f4" stroke="#9a9a9a" stroke-width="1.1"/>
<ellipse cx="12" cy="15.4" rx="5" ry="0.9" fill="#000" opacity="0.07"/>
<circle cx="12.6" cy="12.4" r="2.7" fill="#2fcf3a"/>
<path d="M17.6,11 L16,12.4 L17.6,13.8 Z" fill="#2fbf3a" stroke="#2fbf3a" stroke-width="0.6"/></svg>
<svg class="a" style="left:1032px;top:285.6px" width="24" height="24" viewBox="0 0 24 24"><defs><linearGradient id="eg" x1="0" y1="0" x2="0" y2="1"><stop offset="0" stop-color="#fff" stop-opacity="0.3"/><stop offset="0.35" stop-color="#e23b40"/><stop offset="1" stop-color="#b0141a"/></linearGradient></defs>
<path d="M7.1,4 H11.8 V14.3 H13.9 L9.4,19.2 L4.9,14.3 H7.1 Z" fill="url(#eg)"/>
<text x="14.8" y="9.4" font-family="Liberation Serif" font-weight="bold" font-size="6.2" fill="#000">01</text>
<text x="14.8" y="14.4" font-family="Liberation Serif" font-weight="bold" font-size="6.2" fill="#000">10</text>
<text x="14.8" y="19.3" font-family="Liberation Serif" font-weight="bold" font-size="6.2" fill="#000">01</text></svg>
<div class="a" style="left:255px;top:351px;width:815px;height:1px;background:#a3bde3"></div>
<span id="t56" class="a t" style="left:312.5px;top:324.84px;font-size:11px;line-height:14.3px;color:#111;">010.02</span>
<span id="t57" class="a t" style="left:428.4px;top:327.84px;font-size:10.7px;line-height:13.91px;color:#111;">Tüzükler</span>
<svg class="a" style="left:849.2px;top:324.3px" width="17" height="16" viewBox="0 0 17 16"><path d="M1.5,6.8 V5.5 Q1.5,1.5 5.5,1.5 H10.2 M13.5,7.5 V10.5 Q13.5,14.5 9.5,14.5 H5.5 Q1.5,14.5 1.5,10.5 V9.5" stroke="#2d5a2f" stroke-width="2" fill="none"/>
<path d="M5.2,5.6 L8.6,9.6 L15.4,1" stroke="#2d5a2f" stroke-width="2.2" fill="none" stroke-linecap="round"/></svg>
<div class="a" style="left:976.2px;top:320.8px;width:26.6px;height:26.6px;border:1px solid #a3bde3;background:linear-gradient(#f4f8fc,#e2eaf5)"></div>
<div class="a" style="left:1004.2px;top:320.8px;width:26.6px;height:26.6px;border:1px solid #a3bde3;background:linear-gradient(#f4f8fc,#e2eaf5)"></div>
<div class="a" style="left:1032.2px;top:320.8px;width:26.6px;height:26.6px;border:1px solid #a3bde3;background:linear-gradient(#f4f8fc,#e2eaf5)"></div>
<svg class="a" style="left:977.5px;top:322.0px" width="24" height="24" viewBox="0 0 24 24"><defs><linearGradient id="pg" x1="0" y1="0" x2="1" y2="1"><stop offset="0" stop-color="#f8ec8c"/><stop offset="1" stop-color="#d0b030"/></linearGradient></defs>
<ellipse cx="10.5" cy="19.6" rx="7" ry="1" fill="#000" opacity="0.07"/>
<path d="M3.8,19 L5,16 L16.4,5.2 L18,6.8 L6.6,17.6 Z" fill="url(#pg)" stroke="#b09020" stroke-width="0.5"/>
<path d="M3.8,19 L4.4,17.4 L5.4,18.4 Z" fill="#111"/>
<path d="M16,5.6 L17.4,4.2 Q18.6,3.4 19.2,4.4 Q19.8,5.4 18.8,6.2 L17.4,7.6 Z" fill="#e8414a"/></svg>
<svg class="a" style="left:1005.5px;top:324.3px" width="24" height="24" viewBox="0 0 24 24"><path d="M4.6,5.5 H10 M7.3,5.5 V12.4 H10.5" stroke="#9a9a9a" stroke-width="1.1" fill="none"/>
<circle cx="12.6" cy="5.4" r="2.5" fill="#f4f4f4" stroke="#9a9a9a" stroke-width="1.1"/>
<ellipse cx="12" cy="15.4" rx="5" ry="0.9" fill="#000" opacity="0.07"/>
<circle cx="12.6" cy="12.4" r="2.7" fill="#2fcf3a"/>
<path d="M17.6,11 L16,12.4 L17.6,13.8 Z" fill="#2fbf3a" stroke="#2fbf3a" stroke-width="0.6"/></svg>
<svg class="a" style="left:1032px;top:321.1px" width="24" height="24" viewBox="0 0 24 24"><defs><linearGradient id="eg" x1="0" y1="0" x2="0" y2="1"><stop offset="0" stop-color="#fff" stop-opacity="0.3"/><stop offset="0.35" stop-color="#e23b40"/><stop offset="1" stop-color="#b0141a"/></linearGradient></defs>
<path d="M7.1,4 H11.8 V14.3 H13.9 L9.4,19.2 L4.9,14.3 H7.1 Z" fill="url(#eg)"/>
<text x="14.8" y="9.4" font-family="Liberation Serif" font-weight="bold" font-size="6.2" fill="#000">01</text>
<text x="14.8" y="14.4" font-family="Liberation Serif" font-weight="bold" font-size="6.2" fill="#000">10</text>
<text x="14.8" y="19.3" font-family="Liberation Serif" font-weight="bold" font-size="6.2" fill="#000">01</text></svg>
<div class="a" style="left:255px;top:386px;width:815px;height:1px;background:#a3bde3"></div>
<span id="t58" class="a t" style="left:312.5px;top:360.34px;font-size:11px;line-height:14.3px;color:#111;">010.03</span>
<span id="t59" class="a t" style="left:428.4px;top:363.34px;font-size:10.7px;line-height:13.91px;color:#111;">Yönetmelikler</span>
<svg class="a" style="left:849.2px;top:359.8px" width="17" height="16" viewBox="0 0 17 16"><path d="M1.5,6.8 V5.5 Q1.5,1.5 5.5,1.5 H10.2 M13.5,7.5 V10.5 Q13.5,14.5 9.5,14.5 H5.5 Q1.5,14.5 1.5,10.5 V9.5" stroke="#2d5a2f" stroke-width="2" fill="none"/>
<path d="M5.2,5.6 L8.6,9.6 L15.4,1" stroke="#2d5a2f" stroke-width="2.2" fill="none" stroke-linecap="round"/></svg>
<div class="a" style="left:976.2px;top:356.3px;width:26.6px;height:26.6px;border:1px solid #a3bde3;background:linear-gradient(#f4f8fc,#e2eaf5)"></div>
<div class="a" style="left:1004.2px;top:356.3px;width:26.6px;height:26.6px;border:1px solid #a3bde3;background:linear-gradient(#f4f8fc,#e2eaf5)"></div>
<div class="a" style="left:1032.2px;top:356.3px;width:26.6px;height:26.6px;border:1px solid #a3bde3;background:linear-gradient(#f4f8fc,#e2eaf5)"></div>
<svg class="a" style="left:977.5px;top:357.5px" width="24" height="24" viewBox="0 0 24 24"><defs><linearGradient id="pg" x1="0" y1="0" x2="1" y2="1"><stop offset="0" stop-color="#f8ec8c"/><stop offset="1" stop-color="#d0b030"/></linearGradient></defs>
<ellipse cx="10.5" cy="19.6" rx="7" ry="1" fill="#000" opacity="0.07"/>
<path d="M3.8,19 L5,16 L16.4,5.2 L18,6.8 L6.6,17.6 Z" fill="url(#pg)" stroke="#b09020" stroke-width="0.5"/>
<path d="M3.8,19 L4.4,17.4 L5.4,18.4 Z" fill="#111"/>
<path d="M16,5.6 L17.4,4.2 Q18.6,3.4 19.2,4.4 Q19.8,5.4 18.8,6.2 L17.4,7.6 Z" fill="#e8414a"/></svg>
<svg class="a" style="left:1005.5px;top:359.8px" width="24" height="24" viewBox="0 0 24 24"><path d="M4.6,5.5 H10 M7.3,5.5 V12.4 H10.5" stroke="#9a9a9a" stroke-width="1.1" fill="none"/>
<circle cx="12.6" cy="5.4" r="2.5" fill="#f4f4f4" stroke="#9a9a9a" stroke-width="1.1"/>
<ellipse cx="12" cy="15.4" rx="5" ry="0.9" fill="#000" opacity="0.07"/>
<circle cx="12.6" cy="12.4" r="2.7" fill="#2fcf3a"/>
<path d="M17.6,11 L16,12.4 L17.6,13.8 Z" fill="#2fbf3a" stroke="#2fbf3a" stroke-width="0.6"/></svg>
<svg class="a" style="left:1032px;top:356.6px" width="24" height="24" viewBox="0 0 24 24"><defs><linearGradient id="eg" x1="0" y1="0" x2="0" y2="1"><stop offset="0" stop-color="#fff" stop-opacity="0.3"/><stop offset="0.35" stop-color="#e23b40"/><stop offset="1" stop-color="#b0141a"/></linearGradient></defs>
<path d="M7.1,4 H11.8 V14.3 H13.9 L9.4,19.2 L4.9,14.3 H7.1 Z" fill="url(#eg)"/>
<text x="14.8" y="9.4" font-family="Liberation Serif" font-weight="bold" font-size="6.2" fill="#000">01</text>
<text x="14.8" y="14.4" font-family="Liberation Serif" font-weight="bold" font-size="6.2" fill="#000">10</text>
<text x="14.8" y="19.3" font-family="Liberation Serif" font-weight="bold" font-size="6.2" fill="#000">01</text></svg>
<div class="a" style="left:255px;top:422px;width:815px;height:1px;background:#a3bde3"></div>
<span id="t60" class="a t" style="left:312.5px;top:395.84px;font-size:11px;line-height:14.3px;color:#111;">010.04</span>
<span id="t61" class="a t" style="left:428.4px;top:398.84px;font-size:10.7px;line-height:13.91px;color:#111;">Yönergeler</span>
<svg class="a" style="left:849.2px;top:395.3px" width="17" height="16" viewBox="0 0 17 16"><path d="M1.5,6.8 V5.5 Q1.5,1.5 5.5,1.5 H10.2 M13.5,7.5 V10.5 Q13.5,14.5 9.5,14.5 H5.5 Q1.5,14.5 1.5,10.5 V9.5" stroke="#2d5a2f" stroke-width="2" fill="none"/>
<path d="M5.2,5.6 L8.6,9.6 L15.4,1" stroke="#2d5a2f" stroke-width="2.2" fill="none" stroke-linecap="round"/></svg>
<div class="a" style="left:976.2px;top:391.8px;width:26.6px;height:26.6px;border:1px solid #a3bde3;background:linear-gradient(#f4f8fc,#e2eaf5)"></div>
<div class="a" style="left:1004.2px;top:391.8px;width:26.6px;height:26.6px;border:1px solid #a3bde3;background:linear-gradient(#f4f8fc,#e2eaf5)"></div>
<div class="a" style="left:1032.2px;top:391.8px;width:26.6px;height:26.6px;border:1px solid #a3bde3;background:linear-gradient(#f4f8fc,#e2eaf5)"></div>
<svg class="a" style="left:977.5px;top:393.0px" width="24" height="24" viewBox="0 0 24 24"><defs><linearGradient id="pg" x1="0" y1="0" x2="1" y2="1"><stop offset="0" stop-color="#f8ec8c"/><stop offset="1" stop-color="#d0b030"/></linearGradient></defs>
<ellipse cx="10.5" cy="19.6" rx="7" ry="1" fill="#000" opacity="0.07"/>
<path d="M3.8,19 L5,16 L16.4,5.2 L18,6.8 L6.6,17.6 Z" fill="url(#pg)" stroke="#b09020" stroke-width="0.5"/>
<path d="M3.8,19 L4.4,17.4 L5.4,18.4 Z" fill="#111"/>
<path d="M16,5.6 L17.4,4.2 Q18.6,3.4 19.2,4.4 Q19.8,5.4 18.8,6.2 L17.4,7.6 Z" fill="#e8414a"/></svg>
<svg class="a" style="left:1005.5px;top:395.3px" width="24" height="24" viewBox="0 0 24 24"><path d="M4.6,5.5 H10 M7.3,5.5 V12.4 H10.5" stroke="#9a9a9a" stroke-width="1.1" fill="none"/>
<circle cx="12.6" cy="5.4" r="2.5" fill="#f4f4f4" stroke="#9a9a9a" stroke-width="1.1"/>
<ellipse cx="12" cy="15.4" rx="5" ry="0.9" fill="#000" opacity="0.07"/>
<circle cx="12.6" cy="12.4" r="2.7" fill="#2fcf3a"/>
<path d="M17.6,11 L16,12.4 L17.6,13.8 Z" fill="#2fbf3a" stroke="#2fbf3a" stroke-width="0.6"/></svg>
<svg class="a" style="left:1032px;top:392.1px" width="24" height="24" viewBox="0 0 24 24"><defs><linearGradient id="eg" x1="0" y1="0" x2="0" y2="1"><stop offset="0" stop-color="#fff" stop-opacity="0.3"/><stop offset="0.35" stop-color="#e23b40"/><stop offset="1" stop-color="#b0141a"/></linearGradient></defs>
<path d="M7.1,4 H11.8 V14.3 H13.9 L9.4,19.2 L4.9,14.3 H7.1 Z" fill="url(#eg)"/>
<text x="14.8" y="9.4" font-family="Liberation Serif" font-weight="bold" font-size="6.2" fill="#000">01</text>
<text x="14.8" y="14.4" font-family="Liberation Serif" font-weight="bold" font-size="6.2" fill="#000">10</text>
<text x="14.8" y="19.3" font-family="Liberation Serif" font-weight="bold" font-size="6.2" fill="#000">01</text></svg>
<div class="a" style="left:255px;top:457px;width:815px;height:1px;background:#a3bde3"></div>
<span id="t62" class="a t" style="left:312.5px;top:431.34px;font-size:11px;line-height:14.3px;color:#111;">010.05</span>
<span id="t63" class="a t" style="left:428.4px;top:434.34px;font-size:10.7px;line-height:13.91px;color:#111;">Tebliğler</span>
<svg class="a" style="left:849.2px;top:430.8px" width="17" height="16" viewBox="0 0 17 16"><path d="M1.5,6.8 V5.5 Q1.5,1.5 5.5,1.5 H10.2 M13.5,7.5 V10.5 Q13.5,14.5 9.5,14.5 H5.5 Q1.5,14.5 1.5,10.5 V9.5" stroke="#2d5a2f" stroke-width="2" fill="none"/>
<path d="M5.2,5.6 L8.6,9.6 L15.4,1" stroke="#2d5a2f" stroke-width="2.2" fill="none" stroke-linecap="round"/></svg>
<div class="a" style="left:976.2px;top:427.3px;width:26.6px;height:26.6px;border:1px solid #a3bde3;background:linear-gradient(#f4f8fc,#e2eaf5)"></div>
<div class="a" style="left:1004.2px;top:427.3px;width:26.6px;height:26.6px;border:1px solid #a3bde3;background:linear-gradient(#f4f8fc,#e2eaf5)"></div>
<div class="a" style="left:1032.2px;top:427.3px;width:26.6px;height:26.6px;border:1px solid #a3bde3;background:linear-gradient(#f4f8fc,#e2eaf5)"></div>
<svg class="a" style="left:977.5px;top:428.5px" width="24" height="24" viewBox="0 0 24 24"><defs><linearGradient id="pg" x1="0" y1="0" x2="1" y2="1"><stop offset="0" stop-color="#f8ec8c"/><stop offset="1" stop-color="#d0b030"/></linearGradient></defs>
<ellipse cx="10.5" cy="19.6" rx="7" ry="1" fill="#000" opacity="0.07"/>
<path d="M3.8,19 L5,16 L16.4,5.2 L18,6.8 L6.6,17.6 Z" fill="url(#pg)" stroke="#b09020" stroke-width="0.5"/>
<path d="M3.8,19 L4.4,17.4 L5.4,18.4 Z" fill="#111"/>
<path d="M16,5.6 L17.4,4.2 Q18.6,3.4 19.2,4.4 Q19.8,5.4 18.8,6.2 L17.4,7.6 Z" fill="#e8414a"/></svg>
<svg class="a" style="left:1005.5px;top:430.8px" width="24" height="24" viewBox="0 0 24 24"><path d="M4.6,5.5 H10 M7.3,5.5 V12.4 H10.5" stroke="#9a9a9a" stroke-width="1.1" fill="none"/>
<circle cx="12.6" cy="5.4" r="2.5" fill="#f4f4f4" stroke="#9a9a9a" stroke-width="1.1"/>
<ellipse cx="12" cy="15.4" rx="5" ry="0.9" fill="#000" opacity="0.07"/>
<circle cx="12.6" cy="12.4" r="2.7" fill="#2fcf3a"/>
<path d="M17.6,11 L16,12.4 L17.6,13.8 Z" fill="#2fbf3a" stroke="#2fbf3a" stroke-width="0.6"/></svg>
<svg class="a" style="left:1032px;top:427.6px" width="24" height="24" viewBox="0 0 24 24"><defs><linearGradient id="eg" x1="0" y1="0" x2="0" y2="1"><stop offset="0" stop-color="#fff" stop-opacity="0.3"/><stop offset="0.35" stop-color="#e23b40"/><stop offset="1" stop-color="#b0141a"/></linearGradient></defs>
<path d="M7.1,4 H11.8 V14.3 H13.9 L9.4,19.2 L4.9,14.3 H7.1 Z" fill="url(#eg)"/>
<text x="14.8" y="9.4" font-family="Liberation Serif" font-weight="bold" font-size="6.2" fill="#000">01</text>
<text x="14.8" y="14.4" font-family="Liberation Serif" font-weight="bold" font-size="6.2" fill="#000">10</text>
<text x="14.8" y="19.3" font-family="Liberation Serif" font-weight="bold" font-size="6.2" fill="#000">01</text></svg>
<div class="a" style="left:255px;top:493px;width:815px;height:1px;background:#a3bde3"></div>
<span id="t64" class="a t" style="left:312.5px;top:466.84px;font-size:11px;line-height:14.3px;color:#111;">010.06</span>
<span id="t65" class="a t" style="left:428.4px;top:469.84px;font-size:10.7px;line-height:13.91px;color:#111;">Genelgeler</span>
<svg class="a" style="left:849.2px;top:466.3px" width="17" height="16" viewBox="0 0 17 16"><path d="M1.5,6.8 V5.5 Q1.5,1.5 5.5,1.5 H10.2 M13.5,7.5 V10.5 Q13.5,14.5 9.5,14.5 H5.5 Q1.5,14.5 1.5,10.5 V9.5" stroke="#2d5a2f" stroke-width="2" fill="none"/>
<path d="M5.2,5.6 L8.6,9.6 L15.4,1" stroke="#2d5a2f" stroke-width="2.2" fill="none" stroke-linecap="round"/></svg>
<div class="a" style="left:976.2px;top:462.8px;width:26.6px;height:26.6px;border:1px solid #a3bde3;background:linear-gradient(#f4f8fc,#e2eaf5)"></div>
<div class="a" style="left:1004.2px;top:462.8px;width:26.6px;height:26.6px;border:1px solid #a3bde3;background:linear-gradient(#f4f8fc,#e2eaf5)"></div>
<div class="a" style="left:1032.2px;top:462.8px;width:26.6px;height:26.6px;border:1px solid #a3bde3;background:linear-gradient(#f4f8fc,#e2eaf5)"></div>
<svg class="a" style="left:977.5px;top:464.0px" width="24" height="24" viewBox="0 0 24 24"><defs><linearGradient id="pg" x1="0" y1="0" x2="1" y2="1"><stop offset="0" stop-color="#f8ec8c"/><stop offset="1" stop-color="#d0b030"/></linearGradient></defs>
<ellipse cx="10.5" cy="19.6" rx="7" ry="1" fill="#000" opacity="0.07"/>
<path d="M3.8,19 L5,16 L16.4,5.2 L18,6.8 L6.6,17.6 Z" fill="url(#pg)" stroke="#b09020" stroke-width="0.5"/>
<path d="M3.8,19 L4.4,17.4 L5.4,18.4 Z" fill="#111"/>
<path d="M16,5.6 L17.4,4.2 Q18.6,3.4 19.2,4.4 Q19.8,5.4 18.8,6.2 L17.4,7.6 Z" fill="#e8414a"/></svg>
<svg class="a" style="left:1005.5px;top:466.3px" width="24" height="24" viewBox="0 0 24 24"><path d="M4.6,5.5 H10 M7.3,5.5 V12.4 H10.5" stroke="#9a9a9a" stroke-width="1.1" fill="none"/>
<circle cx="12.6" cy="5.4" r="2.5" fill="#f4f4f4" stroke="#9a9a9a" stroke-width="1.1"/>
<ellipse cx="12" cy="15.4" rx="5" ry="0.9" fill="#000" opacity="0.07"/>
<circle cx="12.6" cy="12.4" r="2.7" fill="#2fcf3a"/>
<path d="M17.6,11 L16,12.4 L17.6,13.8 Z" fill="#2fbf3a" stroke="#2fbf3a" stroke-width="0.6"/></svg>
<svg class="a" style="left:1032px;top:463.1px" width="24" height="24" viewBox="0 0 24 24"><defs><linearGradient id="eg" x1="0" y1="0" x2="0" y2="1"><stop offset="0" stop-color="#fff" stop-opacity="0.3"/><stop offset="0.35" stop-color="#e23b40"/><stop offset="1" stop-color="#b0141a"/></linearGradient></defs>
<path d="M7.1,4 H11.8 V14.3 H13.9 L9.4,19.2 L4.9,14.3 H7.1 Z" fill="url(#eg)"/>
<text x="14.8" y="9.4" font-family="Liberation Serif" font-weight="bold" font-size="6.2" fill="#000">01</text>
<text x="14.8" y="14.4" font-family="Liberation Serif" font-weight="bold" font-size="6.2" fill="#000">10</text>
<text x="14.8" y="19.3" font-family="Liberation Serif" font-weight="bold" font-size="6.2" fill="#000">01</text></svg>
<div class="a" style="left:255px;top:528px;width:815px;height:1px;background:#a3bde3"></div>
<span id="t66" class="a t" style="left:312.5px;top:502.34px;font-size:11px;line-height:14.3px;color:#111;">010.07</span>
<span id="t67" class="a t" style="left:428.4px;top:505.34px;font-size:10.7px;line-height:13.91px;color:#111;">Talimatlar, Duyurular, Sirkülerler</span>
<svg class="a" style="left:849.2px;top:501.8px" width="17" height="16" viewBox="0 0 17 16"><path d="M1.5,6.8 V5.5 Q1.5,1.5 5.5,1.5 H10.2 M13.5,7.5 V10.5 Q13.5,14.5 9.5,14.5 H5.5 Q1.5,14.5 1.5,10.5 V9.5" stroke="#2d5a2f" stroke-width="2" fill="none"/>
<path d="M5.2,5.6 L8.6,9.6 L15.4,1" stroke="#2d5a2f" stroke-width="2.2" fill="none" stroke-linecap="round"/></svg>
<div class="a" style="left:976.2px;top:498.3px;width:26.6px;height:26.6px;border:1px solid #a3bde3;background:linear-gradient(#f4f8fc,#e2eaf5)"></div>
<div class="a" style="left:1004.2px;top:498.3px;width:26.6px;height:26.6px;border:1px solid #a3bde3;background:linear-gradient(#f4f8fc,#e2eaf5)"></div>
<div class="a" style="left:1032.2px;top:498.3px;width:26.6px;height:26.6px;border:1px solid #a3bde3;background:linear-gradient(#f4f8fc,#e2eaf5)"></div>
<svg class="a" style="left:977.5px;top:499.5px" width="24" height="24" viewBox="0 0 24 24"><defs><linearGradient id="pg" x1="0" y1="0" x2="1" y2="1"><stop offset="0" stop-color="#f8ec8c"/><stop offset="1" stop-color="#d0b030"/></linearGradient></defs>
<ellipse cx="10.5" cy="19.6" rx="7" ry="1" fill="#000" opacity="0.07"/>
<path d="M3.8,19 L5,16 L16.4,5.2 L18,6.8 L6.6,17.6 Z" fill="url(#pg)" stroke="#b09020" stroke-width="0.5"/>
<path d="M3.8,19 L4.4,17.4 L5.4,18.4 Z" fill="#111"/>
<path d="M16,5.6 L17.4,4.2 Q18.6,3.4 19.2,4.4 Q19.8,5.4 18.8,6.2 L17.4,7.6 Z" fill="#e8414a"/></svg>
<svg class="a" style="left:1005.5px;top:501.8px" width="24" height="24" viewBox="0 0 24 24"><path d="M4.6,5.5 H10 M7.3,5.5 V12.4 H10.5" stroke="#9a9a9a" stroke-width="1.1" fill="none"/>
<circle cx="12.6" cy="5.4" r="2.5" fill="#f4f4f4" stroke="#9a9a9a" stroke-width="1.1"/>
<ellipse cx="12" cy="15.4" rx="5" ry="0.9" fill="#000" opacity="0.07"/>
<circle cx="12.6" cy="12.4" r="2.7" fill="#2fcf3a"/>
<path d="M17.6,11 L16,12.4 L17.6,13.8 Z" fill="#2fbf3a" stroke="#2fbf3a" stroke-width="0.6"/></svg>
<svg class="a" style="left:1032px;top:498.6px" width="24" height="24" viewBox="0 0 24 24"><defs><linearGradient id="eg" x1="0" y1="0" x2="0" y2="1"><stop offset="0" stop-color="#fff" stop-opacity="0.3"/><stop offset="0.35" stop-color="#e23b40"/><stop offset="1" stop-color="#b0141a"/></linearGradient></defs>
<path d="M7.1,4 H11.8 V14.3 H13.9 L9.4,19.2 L4.9,14.3 H7.1 Z" fill="url(#eg)"/>
<text x="14.8" y="9.4" font-family="Liberation Serif" font-weight="bold" font-size="6.2" fill="#000">01</text>
<text x="14.8" y="14.4" font-family="Liberation Serif" font-weight="bold" font-size="6.2" fill="#000">10</text>
<text x="14.8" y="19.3" font-family="Liberation Serif" font-weight="bold" font-size="6.2" fill="#000">01</text></svg>
<div class="a" style="left:255px;top:564px;width:815px;height:1px;background:#a3bde3"></div>
<span id="t68" class="a t" style="left:312.5px;top:537.84px;font-size:11px;line-height:14.3px;color:#111;">010.08</span>
<span id="t69" class="a t" style="left:428.4px;top:540.84px;font-size:10.7px;line-height:13.91px;color:#111;">Rehber, Kılavuz</span>
<svg class="a" style="left:849.2px;top:537.3px" width="17" height="16" viewBox="0 0 17 16"><path d="M1.5,6.8 V5.5 Q1.5,1.5 5.5,1.5 H10.2 M13.5,7.5 V10.5 Q13.5,14.5 9.5,14.5 H5.5 Q1.5,14.5 1.5,10.5 V9.5" stroke="#2d5a2f" stroke-width="2" fill="none"/>
<path d="M5.2,5.6 L8.6,9.6 L15.4,1" stroke="#2d5a2f" stroke-width="2.2" fill="none" stroke-linecap="round"/></svg>
<div class="a" style="left:976.2px;top:533.8px;width:26.6px;height:26.6px;border:1px solid #a3bde3;background:linear-gradient(#f4f8fc,#e2eaf5)"></div>
<div class="a" style="left:1004.2px;top:533.8px;width:26.6px;height:26.6px;border:1px solid #a3bde3;background:linear-gradient(#f4f8fc,#e2eaf5)"></div>
<div class="a" style="left:1032.2px;top:533.8px;width:26.6px;height:26.6px;border:1px solid #a3bde3;background:linear-gradient(#f4f8fc,#e2eaf5)"></div>
<svg class="a" style="left:977.5px;top:535.0px" width="24" height="24" viewBox="0 0 24 24"><defs><linearGradient id="pg" x1="0" y1="0" x2="1" y2="1"><stop offset="0" stop-color="#f8ec8c"/><stop offset="1" stop-color="#d0b030"/></linearGradient></defs>
<ellipse cx="10.5" cy="19.6" rx="7" ry="1" fill="#000" opacity="0.07"/>
<path d="M3.8,19 L5,16 L16.4,5.2 L18,6.8 L6.6,17.6 Z" fill="url(#pg)" stroke="#b09020" stroke-width="0.5"/>
<path d="M3.8,19 L4.4,17.4 L5.4,18.4 Z" fill="#111"/>
<path d="M16,5.6 L17.4,4.2 Q18.6,3.4 19.2,4.4 Q19.8,5.4 18.8,6.2 L17.4,7.6 Z" fill="#e8414a"/></svg>
<svg class="a" style="left:1005.5px;top:537.3px" width="24" height="24" viewBox="0 0 24 24"><path d="M4.6,5.5 H10 M7.3,5.5 V12.4 H10.5" stroke="#9a9a9a" stroke-width="1.1" fill="none"/>
<circle cx="12.6" cy="5.4" r="2.5" fill="#f4f4f4" stroke="#9a9a9a" stroke-width="1.1"/>
<ellipse cx="12" cy="15.4" rx="5" ry="0.9" fill="#000" opacity="0.07"/>
<circle cx="12.6" cy="12.4" r="2.7" fill="#2fcf3a"/>
<path d="M17.6,11 L16,12.4 L17.6,13.8 Z" fill="#2fbf3a" stroke="#2fbf3a" stroke-width="0.6"/></svg>
<svg class="a" style="left:1032px;top:534.1px" width="24" height="24" viewBox="0 0 24 24"><defs><linearGradient id="eg" x1="0" y1="0" x2="0" y2="1"><stop offset="0" stop-color="#fff" stop-opacity="0.3"/><stop offset="0.35" stop-color="#e23b40"/><stop offset="1" stop-color="#b0141a"/></linearGradient></defs>
<path d="M7.1,4 H11.8 V14.3 H13.9 L9.4,19.2 L4.9,14.3 H7.1 Z" fill="url(#eg)"/>
<text x="14.8" y="9.4" font-family="Liberation Serif" font-weight="bold" font-size="6.2" fill="#000">01</text>
<text x="14.8" y="14.4" font-family="Liberation Serif" font-weight="bold" font-size="6.2" fill="#000">10</text>
<text x="14.8" y="19.3" font-family="Liberation Serif" font-weight="bold" font-size="6.2" fill="#000">01</text></svg>
<div class="a" style="left:255px;top:599px;width:815px;height:1px;background:#a3bde3"></div>
<span id="t70" class="a t" style="left:312.5px;top:573.34px;font-size:11px;line-height:14.3px;color:#111;">010.09</span>
<span id="t71" class="a t" style="left:428.4px;top:576.34px;font-size:10.7px;line-height:13.91px;color:#111;">Standartlar</span>
<svg class="a" style="left:849.2px;top:572.8px" width="17" height="16" viewBox="0 0 17 16"><path d="M1.5,6.8 V5.5 Q1.5,1.5 5.5,1.5 H10.2 M13.5,7.5 V10.5 Q13.5,14.5 9.5,14.5 H5.5 Q1.5,14.5 1.5,10.5 V9.5" stroke="#2d5a2f" stroke-width="2" fill="none"/>
<path d="M5.2,5.6 L8.6,9.6 L15.4,1" stroke="#2d5a2f" stroke-width="2.2" fill="none" stroke-linecap="round"/></svg>
<div class="a" style="left:976.2px;top:569.3px;width:26.6px;height:26.6px;border:1px solid #a3bde3;background:linear-gradient(#f4f8fc,#e2eaf5)"></div>
<div class="a" style="left:1004.2px;top:569.3px;width:26.6px;height:26.6px;border:1px solid #a3bde3;background:linear-gradient(#f4f8fc,#e2eaf5)"></div>
<div class="a" style="left:1032.2px;top:569.3px;width:26.6px;height:26.6px;border:1px solid #a3bde3;background:linear-gradient(#f4f8fc,#e2eaf5)"></div>
<svg class="a" style="left:977.5px;top:570.5px" width="24" height="24" viewBox="0 0 24 24"><defs><linearGradient id="pg" x1="0" y1="0" x2="1" y2="1"><stop offset="0" stop-color="#f8ec8c"/><stop offset="1" stop-color="#d0b030"/></linearGradient></defs>
<ellipse cx="10.5" cy="19.6" rx="7" ry="1" fill="#000" opacity="0.07"/>
<path d="M3.8,19 L5,16 L16.4,5.2 L18,6.8 L6.6,17.6 Z" fill="url(#pg)" stroke="#b09020" stroke-width="0.5"/>
<path d="M3.8,19 L4.4,17.4 L5.4,18.4 Z" fill="#111"/>
<path d="M16,5.6 L17.4,4.2 Q18.6,3.4 19.2,4.4 Q19.8,5.4 18.8,6.2 L17.4,7.6 Z" fill="#e8414a"/></svg>
<svg class="a" style="left:1005.5px;top:572.8px" width="24" height="24" viewBox="0 0 24 24"><path d="M4.6,5.5 H10 M7.3,5.5 V12.4 H10.5" stroke="#9a9a9a" stroke-width="1.1" fill="none"/>
<circle cx="12.6" cy="5.4" r="2.5" fill="#f4f4f4" stroke="#9a9a9a" stroke-width="1.1"/>
<ellipse cx="12" cy="15.4" rx="5" ry="0.9" fill="#000" opacity="0.07"/>
<circle cx="12.6" cy="12.4" r="2.7" fill="#2fcf3a"/>
<path d="M17.6,11 L16,12.4 L17.6,13.8 Z" fill="#2fbf3a" stroke="#2fbf3a" stroke-width="0.6"/></svg>
<svg class="a" style="left:1032px;top:569.6px" width="24" height="24" viewBox="0 0 24 24"><defs><linearGradient id="eg" x1="0" y1="0" x2="0" y2="1"><stop offset="0" stop-color="#fff" stop-opacity="0.3"/><stop offset="0.35" stop-color="#e23b40"/><stop offset="1" stop-color="#b0141a"/></linearGradient></defs>
<path d="M7.1,4 H11.8 V14.3 H13.9 L9.4,19.2 L4.9,14.3 H7.1 Z" fill="url(#eg)"/>
<text x="14.8" y="9.4" font-family="Liberation Serif" font-weight="bold" font-size="6.2" fill="#000">01</text>
<text x="14.8" y="14.4" font-family="Liberation Serif" font-weight="bold" font-size="6.2" fill="#000">10</text>
<text x="14.8" y="19.3" font-family="Liberation Serif" font-weight="bold" font-size="6.2" fill="#000">01</text></svg>
<div class="a" style="left:255px;top:635px;width:815px;height:1px;background:#a3bde3"></div>
<span id="t72" class="a t" style="left:312.5px;top:608.84px;font-size:11px;line-height:14.3px;color:#111;">010.10</span>
<span id="t73" class="a t" style="left:428.4px;top:611.84px;font-size:10.7px;line-height:13.91px;color:#111;">USUL VE ESASLAR</span>
<svg class="a" style="left:849.2px;top:608.3px" width="17" height="16" viewBox="0 0 17 16"><path d="M1.5,6.8 V5.5 Q1.5,1.5 5.5,1.5 H10.2 M13.5,7.5 V10.5 Q13.5,14.5 9.5,14.5 H5.5 Q1.5,14.5 1.5,10.5 V9.5" stroke="#2d5a2f" stroke-width="2" fill="none"/>
<path d="M5.2,5.6 L8.6,9.6 L15.4,1" stroke="#2d5a2f" stroke-width="2.2" fill="none" stroke-linecap="round"/></svg>
<div class="a" style="left:976.2px;top:604.8px;width:26.6px;height:26.6px;border:1px solid #a3bde3;background:linear-gradient(#f4f8fc,#e2eaf5)"></div>
<div class="a" style="left:1004.2px;top:604.8px;width:26.6px;height:26.6px;border:1px solid #a3bde3;background:linear-gradient(#f4f8fc,#e2eaf5)"></div>
<div class="a" style="left:1032.2px;top:604.8px;width:26.6px;height:26.6px;border:1px solid #a3bde3;background:linear-gradient(#f4f8fc,#e2eaf5)"></div>
<svg class="a" style="left:977.5px;top:606.0px" width="24" height="24" viewBox="0 0 24 24"><defs><linearGradient id="pg" x1="0" y1="0" x2="1" y2="1"><stop offset="0" stop-color="#f8ec8c"/><stop offset="1" stop-color="#d0b030"/></linearGradient></defs>
<ellipse cx="10.5" cy="19.6" rx="7" ry="1" fill="#000" opacity="0.07"/>
<path d="M3.8,19 L5,16 L16.4,5.2 L18,6.8 L6.6,17.6 Z" fill="url(#pg)" stroke="#b09020" stroke-width="0.5"/>
<path d="M3.8,19 L4.4,17.4 L5.4,18.4 Z" fill="#111"/>
<path d="M16,5.6 L17.4,4.2 Q18.6,3.4 19.2,4.4 Q19.8,5.4 18.8,6.2 L17.4,7.6 Z" fill="#e8414a"/></svg>
<svg class="a" style="left:1005.5px;top:608.3px" width="24" height="24" viewBox="0 0 24 24"><path d="M4.6,5.5 H10 M7.3,5.5 V12.4 H10.5" stroke="#9a9a9a" stroke-width="1.1" fill="none"/>
<circle cx="12.6" cy="5.4" r="2.5" fill="#f4f4f4" stroke="#9a9a9a" stroke-width="1.1"/>
<ellipse cx="12" cy="15.4" rx="5" ry="0.9" fill="#000" opacity="0.07"/>
<circle cx="12.6" cy="12.4" r="2.7" fill="#2fcf3a"/>
<path d="M17.6,11 L16,12.4 L17.6,13.8 Z" fill="#2fbf3a" stroke="#2fbf3a" stroke-width="0.6"/></svg>
<svg class="a" style="left:1032px;top:605.1px" width="24" height="24" viewBox="0 0 24 24"><defs><linearGradient id="eg" x1="0" y1="0" x2="0" y2="1"><stop offset="0" stop-color="#fff" stop-opacity="0.3"/><stop offset="0.35" stop-color="#e23b40"/><stop offset="1" stop-color="#b0141a"/></linearGradient></defs>
<path d="M7.1,4 H11.8 V14.3 H13.9 L9.4,19.2 L4.9,14.3 H7.1 Z" fill="url(#eg)"/>
<text x="14.8" y="9.4" font-family="Liberation Serif" font-weight="bold" font-size="6.2" fill="#000">01</text>
<text x="14.8" y="14.4" font-family="Liberation Serif" font-weight="bold" font-size="6.2" fill="#000">10</text>
<text x="14.8" y="19.3" font-family="Liberation Serif" font-weight="bold" font-size="6.2" fill="#000">01</text></svg>
<div class="a" style="left:255px;top:670px;width:815px;height:1px;background:#a3bde3"></div>
<span id="t74" class="a t" style="left:312.5px;top:644.34px;font-size:11px;line-height:14.3px;color:#111;">010.11</span>
<span id="t75" class="a t" style="left:428.4px;top:647.34px;font-size:10.7px;line-height:13.91px;color:#111;">Prosedürler</span>
<svg class="a" style="left:849.2px;top:643.8px" width="17" height="16" viewBox="0 0 17 16"><path d="M1.5,6.8 V5.5 Q1.5,1.5 5.5,1.5 H10.2 M13.5,7.5 V10.5 Q13.5,14.5 9.5,14.5 H5.5 Q1.5,14.5 1.5,10.5 V9.5" stroke="#2d5a2f" stroke-width="2" fill="none"/>
<path d="M5.2,5.6 L8.6,9.6 L15.4,1" stroke="#2d5a2f" stroke-width="2.2" fill="none" stroke-linecap="round"/></svg>
<div class="a" style="left:976.2px;top:640.3px;width:26.6px;height:26.6px;border:1px solid #a3bde3;background:linear-gradient(#f4f8fc,#e2eaf5)"></div>
<div class="a" style="left:1004.2px;top:640.3px;width:26.6px;height:26.6px;border:1px solid #a3bde3;background:linear-gradient(#f4f8fc,#e2eaf5)"></div>
<div class="a" style="left:1032.2px;top:640.3px;width:26.6px;height:26.6px;border:1px solid #a3bde3;background:linear-gradient(#f4f8fc,#e2eaf5)"></div>
<svg class="a" style="left:977.5px;top:641.5px" width="24" height="24" viewBox="0 0 24 24"><defs><linearGradient id="pg" x1="0" y1="0" x2="1" y2="1"><stop offset="0" stop-color="#f8ec8c"/><stop offset="1" stop-color="#d0b030"/></linearGradient></defs>
<ellipse cx="10.5" cy="19.6" rx="7" ry="1" fill="#000" opacity="0.07"/>
<path d="M3.8,19 L5,16 L16.4,5.2 L18,6.8 L6.6,17.6 Z" fill="url(#pg)" stroke="#b09020" stroke-width="0.5"/>
<path d="M3.8,19 L4.4,17.4 L5.4,18.4 Z" fill="#111"/>
<path d="M16,5.6 L17.4,4.2 Q18.6,3.4 19.2,4.4 Q19.8,5.4 18.8,6.2 L17.4,7.6 Z" fill="#e8414a"/></svg>
<svg class="a" style="left:1005.5px;top:643.8px" width="24" height="24" viewBox="0 0 24 24"><path d="M4.6,5.5 H10 M7.3,5.5 V12.4 H10.5" stroke="#9a9a9a" stroke-width="1.1" fill="none"/>
<circle cx="12.6" cy="5.4" r="2.5" fill="#f4f4f4" stroke="#9a9a9a" stroke-width="1.1"/>
<ellipse cx="12" cy="15.4" rx="5" ry="0.9" fill="#000" opacity="0.07"/>
<circle cx="12.6" cy="12.4" r="2.7" fill="#2fcf3a"/>
<path d="M17.6,11 L16,12.4 L17.6,13.8 Z" fill="#2fbf3a" stroke="#2fbf3a" stroke-width="0.6"/></svg>
<svg class="a" style="left:1032px;top:640.6px" width="24" height="24" viewBox="0 0 24 24"><defs><linearGradient id="eg" x1="0" y1="0" x2="0" y2="1"><stop offset="0" stop-color="#fff" stop-opacity="0.3"/><stop offset="0.35" stop-color="#e23b40"/><stop offset="1" stop-color="#b0141a"/></linearGradient></defs>
<path d="M7.1,4 H11.8 V14.3 H13.9 L9.4,19.2 L4.9,14.3 H7.1 Z" fill="url(#eg)"/>
<text x="14.8" y="9.4" font-family="Liberation Serif" font-weight="bold" font-size="6.2" fill="#000">01</text>
<text x="14.8" y="14.4" font-family="Liberation Serif" font-weight="bold" font-size="6.2" fill="#000">10</text>
<text x="14.8" y="19.3" font-family="Liberation Serif" font-weight="bold" font-size="6.2" fill="#000">01</text></svg>
<div class="a" style="left:255px;top:706px;width:815px;height:1px;background:#a3bde3"></div>
<span id="t76" class="a t" style="left:312.5px;top:679.84px;font-size:11px;line-height:14.3px;color:#111;">010.99</span>
<span id="t77" class="a t" style="left:428.4px;top:682.84px;font-size:10.7px;line-height:13.91px;color:#111;">Diğer</span>
<svg class="a" style="left:849.2px;top:679.3px" width="17" height="16" viewBox="0 0 17 16"><path d="M1.5,6.8 V5.5 Q1.5,1.5 5.5,1.5 H10.2 M13.5,7.5 V10.5 Q13.5,14.5 9.5,14.5 H5.5 Q1.5,14.5 1.5,10.5 V9.5" stroke="#2d5a2f" stroke-width="2" fill="none"/>
<path d="M5.2,5.6 L8.6,9.6 L15.4,1" stroke="#2d5a2f" stroke-width="2.2" fill="none" stroke-linecap="round"/></svg>
<div class="a" style="left:976.2px;top:675.8px;width:26.6px;height:26.6px;border:1px solid #a3bde3;background:linear-gradient(#f4f8fc,#e2eaf5)"></div>
<div class="a" style="left:1004.2px;top:675.8px;width:26.6px;height:26.6px;border:1px solid #a3bde3;background:linear-gradient(#f4f8fc,#e2eaf5)"></div>
<div class="a" style="left:1032.2px;top:675.8px;width:26.6px;height:26.6px;border:1px solid #a3bde3;background:linear-gradient(#f4f8fc,#e2eaf5)"></div>
<svg class="a" style="left:977.5px;top:677.0px" width="24" height="24" viewBox="0 0 24 24"><defs><linearGradient id="pg" x1="0" y1="0" x2="1" y2="1"><stop offset="0" stop-color="#f8ec8c"/><stop offset="1" stop-color="#d0b030"/></linearGradient></defs>
<ellipse cx="10.5" cy="19.6" rx="7" ry="1" fill="#000" opacity="0.07"/>
<path d="M3.8,19 L5,16 L16.4,5.2 L18,6.8 L6.6,17.6 Z" fill="url(#pg)" stroke="#b09020" stroke-width="0.5"/>
<path d="M3.8,19 L4.4,17.4 L5.4,18.4 Z" fill="#111"/>
<path d="M16,5.6 L17.4,4.2 Q18.6,3.4 19.2,4.4 Q19.8,5.4 18.8,6.2 L17.4,7.6 Z" fill="#e8414a"/></svg>
<svg class="a" style="left:1005.5px;top:679.3px" width="24" height="24" viewBox="0 0 24 24"><path d="M4.6,5.5 H10 M7.3,5.5 V12.4 H10.5" stroke="#9a9a9a" stroke-width="1.1" fill="none"/>
<circle cx="12.6" cy="5.4" r="2.5" fill="#f4f4f4" stroke="#9a9a9a" stroke-width="1.1"/>
<ellipse cx="12" cy="15.4" rx="5" ry="0.9" fill="#000" opacity="0.07"/>
<circle cx="12.6" cy="12.4" r="2.7" fill="#2fcf3a"/>
<path d="M17.6,11 L16,12.4 L17.6,13.8 Z" fill="#2fbf3a" stroke="#2fbf3a" stroke-width="0.6"/></svg>
<svg class="a" style="left:1032px;top:676.1px" width="24" height="24" viewBox="0 0 24 24"><defs><linearGradient id="eg" x1="0" y1="0" x2="0" y2="1"><stop offset="0" stop-color="#fff" stop-opacity="0.3"/><stop offset="0.35" stop-color="#e23b40"/><stop offset="1" stop-color="#b0141a"/></linearGradient></defs>
<path d="M7.1,4 H11.8 V14.3 H13.9 L9.4,19.2 L4.9,14.3 H7.1 Z" fill="url(#eg)"/>
<text x="14.8" y="9.4" font-family="Liberation Serif" font-weight="bold" font-size="6.2" fill="#000">01</text>
<text x="14.8" y="14.4" font-family="Liberation Serif" font-weight="bold" font-size="6.2" fill="#000">10</text>
<text x="14.8" y="19.3" font-family="Liberation Serif" font-weight="bold" font-size="6.2" fill="#000">01</text></svg>
<div class="a" style="left:255px;top:741px;width:815px;height:1px;background:#a3bde3"></div>
<span id="t78" class="a t" style="left:296.59999999999997px;top:715.34px;font-size:11px;line-height:14.3px;color:#111;">030</span>
<span id="t79" class="a t" style="left:428.4px;top:718.34px;font-size:10.7px;line-height:13.91px;color:#111;">Anlaşma, Sözleşme ve Protokoller</span>
<svg class="a" style="left:287px;top:719.0px" width="4" height="8" viewBox="0 0 4 8"><path d="M0,0 L3.8,3.6 L0,7.2 Z" fill="#111"/></svg>
<svg class="a" style="left:849.2px;top:714.8px" width="17" height="16" viewBox="0 0 17 16"><path d="M1.5,6.8 V5.5 Q1.5,1.5 5.5,1.5 H10.2 M13.5,7.5 V10.5 Q13.5,14.5 9.5,14.5 H5.5 Q1.5,14.5 1.5,10.5 V9.5" stroke="#2d5a2f" stroke-width="2" fill="none"/>
<path d="M5.2,5.6 L8.6,9.6 L15.4,1" stroke="#2d5a2f" stroke-width="2.2" fill="none" stroke-linecap="round"/></svg>
<div class="a" style="left:976.2px;top:711.3px;width:26.6px;height:26.6px;border:1px solid #a3bde3;background:linear-gradient(#f4f8fc,#e2eaf5)"></div>
<div class="a" style="left:1004.2px;top:711.3px;width:26.6px;height:26.6px;border:1px solid #a3bde3;background:linear-gradient(#f4f8fc,#e2eaf5)"></div>
<div class="a" style="left:1032.2px;top:711.3px;width:26.6px;height:26.6px;border:1px solid #a3bde3;background:linear-gradient(#f4f8fc,#e2eaf5)"></div>
<svg class="a" style="left:977.5px;top:712.5px" width="24" height="24" viewBox="0 0 24 24"><defs><linearGradient id="pg" x1="0" y1="0" x2="1" y2="1"><stop offset="0" stop-color="#f8ec8c"/><stop offset="1" stop-color="#d0b030"/></linearGradient></defs>
<ellipse cx="10.5" cy="19.6" rx="7" ry="1" fill="#000" opacity="0.07"/>
<path d="M3.8,19 L5,16 L16.4,5.2 L18,6.8 L6.6,17.6 Z" fill="url(#pg)" stroke="#b09020" stroke-width="0.5"/>
<path d="M3.8,19 L4.4,17.4 L5.4,18.4 Z" fill="#111"/>
<path d="M16,5.6 L17.4,4.2 Q18.6,3.4 19.2,4.4 Q19.8,5.4 18.8,6.2 L17.4,7.6 Z" fill="#e8414a"/></svg>
<svg class="a" style="left:1005.5px;top:714.8px" width="24" height="24" viewBox="0 0 24 24"><path d="M4.6,5.5 H10 M7.3,5.5 V12.4 H10.5" stroke="#9a9a9a" stroke-width="1.1" fill="none"/>
<circle cx="12.6" cy="5.4" r="2.5" fill="#f4f4f4" stroke="#9a9a9a" stroke-width="1.1"/>
<ellipse cx="12" cy="15.4" rx="5" ry="0.9" fill="#000" opacity="0.07"/>
<circle cx="12.6" cy="12.4" r="2.7" fill="#2fcf3a"/>
<path d="M17.6,11 L16,12.4 L17.6,13.8 Z" fill="#2fbf3a" stroke="#2fbf3a" stroke-width="0.6"/></svg>
<svg class="a" style="left:1032px;top:711.6px" width="24" height="24" viewBox="0 0 24 24"><defs><linearGradient id="eg" x1="0" y1="0" x2="0" y2="1"><stop offset="0" stop-color="#fff" stop-opacity="0.3"/><stop offset="0.35" stop-color="#e23b40"/><stop offset="1" stop-color="#b0141a"/></linearGradient></defs>
<path d="M7.1,4 H11.8 V14.3 H13.9 L9.4,19.2 L4.9,14.3 H7.1 Z" fill="url(#eg)"/>
<text x="14.8" y="9.4" font-family="Liberation Serif" font-weight="bold" font-size="6.2" fill="#000">01</text>
<text x="14.8" y="14.4" font-family="Liberation Serif" font-weight="bold" font-size="6.2" fill="#000">10</text>
<text x="14.8" y="19.3" font-family="Liberation Serif" font-weight="bold" font-size="6.2" fill="#000">01</text></svg>
<div class="a" style="left:255px;top:777px;width:815px;height:1px;background:#a3bde3"></div>
<span id="t80" class="a t" style="left:296.59999999999997px;top:750.84px;font-size:11px;line-height:14.3px;color:#111;">040</span>
<span id="t81" class="a t" style="left:428.4px;top:753.84px;font-size:10.7px;line-height:13.91px;color:#111;">Faaliyet Raporları</span>
<svg class="a" style="left:849.2px;top:750.3px" width="17" height="16" viewBox="0 0 17 16"><path d="M1.5,6.8 V5.5 Q1.5,1.5 5.5,1.5 H10.2 M13.5,7.5 V10.5 Q13.5,14.5 9.5,14.5 H5.5 Q1.5,14.5 1.5,10.5 V9.5" stroke="#2d5a2f" stroke-width="2" fill="none"/>
<path d="M5.2,5.6 L8.6,9.6 L15.4,1" stroke="#2d5a2f" stroke-width="2.2" fill="none" stroke-linecap="round"/></svg>
<div class="a" style="left:976.2px;top:746.8px;width:26.6px;height:26.6px;border:1px solid #a3bde3;background:linear-gradient(#f4f8fc,#e2eaf5)"></div>
<div class="a" style="left:1004.2px;top:746.8px;width:26.6px;height:26.6px;border:1px solid #a3bde3;background:linear-gradient(#f4f8fc,#e2eaf5)"></div>
<div class="a" style="left:1032.2px;top:746.8px;width:26.6px;height:26.6px;border:1px solid #a3bde3;background:linear-gradient(#f4f8fc,#e2eaf5)"></div>
<svg class="a" style="left:977.5px;top:748.0px" width="24" height="24" viewBox="0 0 24 24"><defs><linearGradient id="pg" x1="0" y1="0" x2="1" y2="1"><stop offset="0" stop-color="#f8ec8c"/><stop offset="1" stop-color="#d0b030"/></linearGradient></defs>
<ellipse cx="10.5" cy="19.6" rx="7" ry="1" fill="#000" opacity="0.07"/>
<path d="M3.8,19 L5,16 L16.4,5.2 L18,6.8 L6.6,17.6 Z" fill="url(#pg)" stroke="#b09020" stroke-width="0.5"/>
<path d="M3.8,19 L4.4,17.4 L5.4,18.4 Z" fill="#111"/>
<path d="M16,5.6 L17.4,4.2 Q18.6,3.4 19.2,4.4 Q19.8,5.4 18.8,6.2 L17.4,7.6 Z" fill="#e8414a"/></svg>
<svg class="a" style="left:1005.5px;top:750.3px" width="24" height="24" viewBox="0 0 24 24"><path d="M4.6,5.5 H10 M7.3,5.5 V12.4 H10.5" stroke="#9a9a9a" stroke-width="1.1" fill="none"/>
<circle cx="12.6" cy="5.4" r="2.5" fill="#f4f4f4" stroke="#9a9a9a" stroke-width="1.1"/>
<ellipse cx="12" cy="15.4" rx="5" ry="0.9" fill="#000" opacity="0.07"/>
<circle cx="12.6" cy="12.4" r="2.7" fill="#2fcf3a"/>
<path d="M17.6,11 L16,12.4 L17.6,13.8 Z" fill="#2fbf3a" stroke="#2fbf3a" stroke-width="0.6"/></svg>
<svg class="a" style="left:1032px;top:747.1px" width="24" height="24" viewBox="0 0 24 24"><defs><linearGradient id="eg" x1="0" y1="0" x2="0" y2="1"><stop offset="0" stop-color="#fff" stop-opacity="0.3"/><stop offset="0.35" stop-color="#e23b40"/><stop offset="1" stop-color="#b0141a"/></linearGradient></defs>
<path d="M7.1,4 H11.8 V14.3 H13.9 L9.4,19.2 L4.9,14.3 H7.1 Z" fill="url(#eg)"/>
<text x="14.8" y="9.4" font-family="Liberation Serif" font-weight="bold" font-size="6.2" fill="#000">01</text>
<text x="14.8" y="14.4" font-family="Liberation Serif" font-weight="bold" font-size="6.2" fill="#000">10</text>
<text x="14.8" y="19.3" font-family="Liberation Serif" font-weight="bold" font-size="6.2" fill="#000">01</text></svg>
<div class="a" style="left:255px;top:812px;width:815px;height:1px;background:#a3bde3"></div>
<span id="t82" class="a t" style="left:296.59999999999997px;top:786.34px;font-size:11px;line-height:14.3px;color:#111;">041</span>
<span id="t83" class="a t" style="left:428.4px;top:789.34px;font-size:10.7px;line-height:13.91px;color:#111;">Brifingler ve Bilgi Notları</span>
<svg class="a" style="left:849.2px;top:785.8px" width="17" height="16" viewBox="0 0 17 16"><path d="M1.5,6.8 V5.5 Q1.5,1.5 5.5,1.5 H10.2 M13.5,7.5 V10.5 Q13.5,14.5 9.5,14.5 H5.5 Q1.5,14.5 1.5,10.5 V9.5" stroke="#2d5a2f" stroke-width="2" fill="none"/>
<path d="M5.2,5.6 L8.6,9.6 L15.4,1" stroke="#2d5a2f" stroke-width="2.2" fill="none" stroke-linecap="round"/></svg>
<div class="a" style="left:976.2px;top:782.3px;width:26.6px;height:26.6px;border:1px solid #a3bde3;background:linear-gradient(#f4f8fc,#e2eaf5)"></div>
<div class="a" style="left:1004.2px;top:782.3px;width:26.6px;height:26.6px;border:1px solid #a3bde3;background:linear-gradient(#f4f8fc,#e2eaf5)"></div>
<div class="a" style="left:1032.2px;top:782.3px;width:26.6px;height:26.6px;border:1px solid #a3bde3;background:linear-gradient(#f4f8fc,#e2eaf5)"></div>
<svg class="a" style="left:977.5px;top:783.5px" width="24" height="24" viewBox="0 0 24 24"><defs><linearGradient id="pg" x1="0" y1="0" x2="1" y2="1"><stop offset="0" stop-color="#f8ec8c"/><stop offset="1" stop-color="#d0b030"/></linearGradient></defs>
<ellipse cx="10.5" cy="19.6" rx="7" ry="1" fill="#000" opacity="0.07"/>
<path d="M3.8,19 L5,16 L16.4,5.2 L18,6.8 L6.6,17.6 Z" fill="url(#pg)" stroke="#b09020" stroke-width="0.5"/>
<path d="M3.8,19 L4.4,17.4 L5.4,18.4 Z" fill="#111"/>
<path d="M16,5.6 L17.4,4.2 Q18.6,3.4 19.2,4.4 Q19.8,5.4 18.8,6.2 L17.4,7.6 Z" fill="#e8414a"/></svg>
<svg class="a" style="left:1005.5px;top:785.8px" width="24" height="24" viewBox="0 0 24 24"><path d="M4.6,5.5 H10 M7.3,5.5 V12.4 H10.5" stroke="#9a9a9a" stroke-width="1.1" fill="none"/>
<circle cx="12.6" cy="5.4" r="2.5" fill="#f4f4f4" stroke="#9a9a9a" stroke-width="1.1"/>
<ellipse cx="12" cy="15.4" rx="5" ry="0.9" fill="#000" opacity="0.07"/>
<circle cx="12.6" cy="12.4" r="2.7" fill="#2fcf3a"/>
<path d="M17.6,11 L16,12.4 L17.6,13.8 Z" fill="#2fbf3a" stroke="#2fbf3a" stroke-width="0.6"/></svg>
<svg class="a" style="left:1032px;top:782.6px" width="24" height="24" viewBox="0 0 24 24"><defs><linearGradient id="eg" x1="0" y1="0" x2="0" y2="1"><stop offset="0" stop-color="#fff" stop-opacity="0.3"/><stop offset="0.35" stop-color="#e23b40"/><stop offset="1" stop-color="#b0141a"/></linearGradient></defs>
<path d="M7.1,4 H11.8 V14.3 H13.9 L9.4,19.2 L4.9,14.3 H7.1 Z" fill="url(#eg)"/>
<text x="14.8" y="9.4" font-family="Liberation Serif" font-weight="bold" font-size="6.2" fill="#000">01</text>
<text x="14.8" y="14.4" font-family="Liberation Serif" font-weight="bold" font-size="6.2" fill="#000">10</text>
<text x="14.8" y="19.3" font-family="Liberation Serif" font-weight="bold" font-size="6.2" fill="#000">01</text></svg>
<div class="a" style="left:255px;top:848px;width:815px;height:1px;background:#a3bde3"></div>
<span id="t84" class="a t" style="left:296.59999999999997px;top:821.84px;font-size:11px;line-height:14.3px;color:#111;">042</span>
<span id="t85" class="a t" style="left:428.4px;top:824.84px;font-size:10.7px;line-height:13.91px;color:#111;">İstatistikler</span>
<svg class="a" style="left:849.2px;top:821.3px" width="17" height="16" viewBox="0 0 17 16"><path d="M1.5,6.8 V5.5 Q1.5,1.5 5.5,1.5 H10.2 M13.5,7.5 V10.5 Q13.5,14.5 9.5,14.5 H5.5 Q1.5,14.5 1.5,10.5 V9.5" stroke="#2d5a2f" stroke-width="2" fill="none"/>
<path d="M5.2,5.6 L8.6,9.6 L15.4,1" stroke="#2d5a2f" stroke-width="2.2" fill="none" stroke-linecap="round"/></svg>
<div class="a" style="left:976.2px;top:817.8px;width:26.6px;height:26.6px;border:1px solid #a3bde3;background:linear-gradient(#f4f8fc,#e2eaf5)"></div>
<div class="a" style="left:1004.2px;top:817.8px;width:26.6px;height:26.6px;border:1px solid #a3bde3;background:linear-gradient(#f4f8fc,#e2eaf5)"></div>
<div class="a" style="left:1032.2px;top:817.8px;width:26.6px;height:26.6px;border:1px solid #a3bde3;background:linear-gradient(#f4f8fc,#e2eaf5)"></div>
<svg class="a" style="left:977.5px;top:819.0px" width="24" height="24" viewBox="0 0 24 24"><defs><linearGradient id="pg" x1="0" y1="0" x2="1" y2="1"><stop offset="0" stop-color="#f8ec8c"/><stop offset="1" stop-color="#d0b030"/></linearGradient></defs>
<ellipse cx="10.5" cy="19.6" rx="7" ry="1" fill="#000" opacity="0.07"/>
<path d="M3.8,19 L5,16 L16.4,5.2 L18,6.8 L6.6,17.6 Z" fill="url(#pg)" stroke="#b09020" stroke-width="0.5"/>
<path d="M3.8,19 L4.4,17.4 L5.4,18.4 Z" fill="#111"/>
<path d="M16,5.6 L17.4,4.2 Q18.6,3.4 19.2,4.4 Q19.8,5.4 18.8,6.2 L17.4,7.6 Z" fill="#e8414a"/></svg>
<svg class="a" style="left:1005.5px;top:821.3px" width="24" height="24" viewBox="0 0 24 24"><path d="M4.6,5.5 H10 M7.3,5.5 V12.4 H10.5" stroke="#9a9a9a" stroke-width="1.1" fill="none"/>
<circle cx="12.6" cy="5.4" r="2.5" fill="#f4f4f4" stroke="#9a9a9a" stroke-width="1.1"/>
<ellipse cx="12" cy="15.4" rx="5" ry="0.9" fill="#000" opacity="0.07"/>
<circle cx="12.6" cy="12.4" r="2.7" fill="#2fcf3a"/>
<path d="M17.6,11 L16,12.4 L17.6,13.8 Z" fill="#2fbf3a" stroke="#2fbf3a" stroke-width="0.6"/></svg>
<svg class="a" style="left:1032px;top:818.1px" width="24" height="24" viewBox="0 0 24 24"><defs><linearGradient id="eg" x1="0" y1="0" x2="0" y2="1"><stop offset="0" stop-color="#fff" stop-opacity="0.3"/><stop offset="0.35" stop-color="#e23b40"/><stop offset="1" stop-color="#b0141a"/></linearGradient></defs>
<path d="M7.1,4 H11.8 V14.3 H13.9 L9.4,19.2 L4.9,14.3 H7.1 Z" fill="url(#eg)"/>
<text x="14.8" y="9.4" font-family="Liberation Serif" font-weight="bold" font-size="6.2" fill="#000">01</text>
<text x="14.8" y="14.4" font-family="Liberation Serif" font-weight="bold" font-size="6.2" fill="#000">10</text>
<text x="14.8" y="19.3" font-family="Liberation Serif" font-weight="bold" font-size="6.2" fill="#000">01</text></svg>
<div class="a" style="left:255px;top:883px;width:815px;height:1px;background:#a3bde3"></div>
<span id="t86" class="a t" style="left:296.59999999999997px;top:857.34px;font-size:11px;line-height:14.3px;color:#111;">044</span>
<span id="t87" class="a t" style="left:428.4px;top:860.34px;font-size:10.7px;line-height:13.91px;color:#111;">Anketler</span>
<svg class="a" style="left:849.2px;top:856.8px" width="17" height="16" viewBox="0 0 17 16"><path d="M1.5,6.8 V5.5 Q1.5,1.5 5.5,1.5 H10.2 M13.5,7.5 V10.5 Q13.5,14.5 9.5,14.5 H5.5 Q1.5,14.5 1.5,10.5 V9.5" stroke="#2d5a2f" stroke-width="2" fill="none"/>
<path d="M5.2,5.6 L8.6,9.6 L15.4,1" stroke="#2d5a2f" stroke-width="2.2" fill="none" stroke-linecap="round"/></svg>
<div class="a" style="left:976.2px;top:853.3px;width:26.6px;height:26.6px;border:1px solid #a3bde3;background:linear-gradient(#f4f8fc,#e2eaf5)"></div>
<div class="a" style="left:1004.2px;top:853.3px;width:26.6px;height:26.6px;border:1px solid #a3bde3;background:linear-gradient(#f4f8fc,#e2eaf5)"></div>
<div class="a" style="left:1032.2px;top:853.3px;width:26.6px;height:26.6px;border:1px solid #a3bde3;background:linear-gradient(#f4f8fc,#e2eaf5)"></div>
<svg class="a" style="left:977.5px;top:854.5px" width="24" height="24" viewBox="0 0 24 24"><defs><linearGradient id="pg" x1="0" y1="0" x2="1" y2="1"><stop offset="0" stop-color="#f8ec8c"/><stop offset="1" stop-color="#d0b030"/></linearGradient></defs>
<ellipse cx="10.5" cy="19.6" rx="7" ry="1" fill="#000" opacity="0.07"/>
<path d="M3.8,19 L5,16 L16.4,5.2 L18,6.8 L6.6,17.6 Z" fill="url(#pg)" stroke="#b09020" stroke-width="0.5"/>
<path d="M3.8,19 L4.4,17.4 L5.4,18.4 Z" fill="#111"/>
<path d="M16,5.6 L17.4,4.2 Q18.6,3.4 19.2,4.4 Q19.8,5.4 18.8,6.2 L17.4,7.6 Z" fill="#e8414a"/></svg>
<svg class="a" style="left:1005.5px;top:856.8px" width="24" height="24" viewBox="0 0 24 24"><path d="M4.6,5.5 H10 M7.3,5.5 V12.4 H10.5" stroke="#9a9a9a" stroke-width="1.1" fill="none"/>
<circle cx="12.6" cy="5.4" r="2.5" fill="#f4f4f4" stroke="#9a9a9a" stroke-width="1.1"/>
<ellipse cx="12" cy="15.4" rx="5" ry="0.9" fill="#000" opacity="0.07"/>
<circle cx="12.6" cy="12.4" r="2.7" fill="#2fcf3a"/>
<path d="M17.6,11 L16,12.4 L17.6,13.8 Z" fill="#2fbf3a" stroke="#2fbf3a" stroke-width="0.6"/></svg>
<svg class="a" style="left:1032px;top:853.6px" width="24" height="24" viewBox="0 0 24 24"><defs><linearGradient id="eg" x1="0" y1="0" x2="0" y2="1"><stop offset="0" stop-color="#fff" stop-opacity="0.3"/><stop offset="0.35" stop-color="#e23b40"/><stop offset="1" stop-color="#b0141a"/></linearGradient></defs>
<path d="M7.1,4 H11.8 V14.3 H13.9 L9.4,19.2 L4.9,14.3 H7.1 Z" fill="url(#eg)"/>
<text x="14.8" y="9.4" font-family="Liberation Serif" font-weight="bold" font-size="6.2" fill="#000">01</text>
<text x="14.8" y="14.4" font-family="Liberation Serif" font-weight="bold" font-size="6.2" fill="#000">10</text>
<text x="14.8" y="19.3" font-family="Liberation Serif" font-weight="bold" font-size="6.2" fill="#000">01</text></svg>
<div class="a" style="left:418px;top:280px;width:1px;height:36px;background:#a3bde3"></div>
<div class="a" style="left:816px;top:280px;width:1px;height:36px;background:#a3bde3"></div>
<div class="a" style="left:900px;top:280px;width:1px;height:36px;background:#a3bde3"></div>
<div class="a" style="left:254px;top:148px;width:1px;height:732px;background:#a3bde3"></div>
<div class="a" style="left:1070px;top:148px;width:1px;height:732px;background:#a3bde3"></div>
<div class="a" style="left:1077px;top:107px;width:16px;height:773px;background:#f0f0f0"></div>
<div class="a" style="left:1077px;top:124px;width:15px;height:316px;background:#c8c8c8"></div>
<svg class="a" style="left:1080px;top:112px" width="10" height="8" viewBox="0 0 10 8"><path d="M1.4,6.4 L4.6,3 L7.8,6.4" stroke="#4a4a4a" stroke-width="2.5" fill="none"/></svg>
<div class="a" style="left:1093px;top:107px;width:8px;height:773px;background:#eaf1fb;border-left:1px solid #a3bde3;border-right:1px solid #a3bde3"></div>
<div class="a" style="left:1107px;top:113px;width:800px;height:24.6px;border:1px solid #a3bde3;background:linear-gradient(#f6f9fd,#e2eaf6)"></div>
<span id="t88" class="a t" style="letter-spacing:0.212px;left:1113.7px;top:117.94px;font-size:12px;line-height:15.6px;color:#1d3b63;-webkit-text-stroke:0.45px #1d3b63;">Konu Kodu Güncelleme</span>
<span id="t89" class="a t" style="letter-spacing:0.727px;left:1108.8px;top:143.24px;font-size:11px;line-height:14.3px;color:#404040;-webkit-text-stroke:0.45px #404040;">Birim</span>
<span id="t90" class="a t" style="left:1144.0px;top:142.64px;font-size:12px;line-height:15.6px;color:#e8141c;-webkit-text-stroke:0.45px #e8141c;">*</span>
<div class="a" style="left:1108px;top:159px;width:402px;height:32px;border:1px solid #a3bde3;background:#fff"></div>
<span id="t91" class="a t" style="letter-spacing:-0.114px;left:1112.5px;top:169.24px;font-size:10.5px;line-height:13.65px;color:#3a3a3a;">Genel Müdürlük Makamı</span>
<svg class="a" style="left:1486.4px;top:166.6px" width="16" height="16" viewBox="0 0 16 16"><ellipse cx="8.2" cy="14.2" rx="6" ry="0.9" fill="#000" opacity="0.1"/>
<path d="M1.6,2.6 Q2.4,0.9 4.6,1.8 Q7.6,3.4 9.4,6.2 L14.6,13.8 L13.6,14 L8,7.8 Q5.4,5.4 2.6,4.6 Q1.2,4 1.6,2.6 Z" fill="#c81c24"/>
<path d="M2.2,12.4 L8.4,5.8 Q11.6,2.6 15.4,1.8 L15.2,2.4 Q12.2,4 10,7.2 L5.2,13.6 Q3.8,14.8 2.5,14 Q1.6,13.3 2.2,12.4 Z" fill="#e4141c"/>
<path d="M2.4,2.6 Q3.6,2 5.4,3" stroke="#f07078" stroke-width="0.8" fill="none"/></svg>
<span id="t92" class="a t" style="letter-spacing:0.474px;left:1108.8px;top:196.64px;font-size:11px;line-height:14.3px;color:#404040;-webkit-text-stroke:0.45px #404040;">Konu Kodu</span>
<span id="t93" class="a t" style="left:1173.8px;top:197.04px;font-size:12px;line-height:15.6px;color:#e8141c;-webkit-text-stroke:0.45px #e8141c;">*</span>
<span id="t94" class="a t" style="left:1314.2px;top:196.64px;font-size:11px;line-height:14.3px;color:#404040;-webkit-text-stroke:0.45px #404040;">Ad</span>
<span id="t95" class="a t" style="left:1336.0px;top:197.04px;font-size:12px;line-height:15.6px;color:#e8141c;-webkit-text-stroke:0.45px #e8141c;">*</span>
<div class="a" style="left:1109px;top:213px;width:184px;height:23px;border:1px solid #a3bde3;background:#ffffc4"></div>
<span id="t96" class="a t" style="left:1113.7px;top:218.04px;font-size:11px;line-height:14.3px;color:#111;">010.01</span>
<div class="a" style="left:1315px;top:213px;width:190px;height:23px;border:1px solid #a3bde3;background:#ffffc4"></div>
<span id="t97" class="a t" style="left:1319.8px;top:218.44px;font-size:11px;line-height:14.3px;color:#111;">Kanunlar</span>
<div class="a" style="left:1289px;top:230px;width:212px;height:48px;border:5px solid #ec1c24"></div>
<div class="a" style="left:1316.7px;top:247px;width:18.2px;height:18.2px;border:1px solid #9fb8dc;border-radius:2px;background:linear-gradient(#f2f6fc,#dce7f5)"></div>
<svg class="a" style="left:1320px;top:251px" width="12" height="11" viewBox="0 0 12 11"><path d="M1.6,5.6 L4.6,8.6 L10.4,2" stroke="#1d3b63" stroke-width="2.2" fill="none"/></svg>
<span id="t98" class="a t" style="letter-spacing:0.509px;left:1346.6000000000001px;top:246.24px;font-size:11px;line-height:14.3px;color:#404040;-webkit-text-stroke:0.45px #404040;">Konu Alanında Gelsin</span>
<span id="t99" class="a t" style="left:1109.4px;top:287.84px;font-size:11px;line-height:14.3px;color:#404040;-webkit-text-stroke:0.45px #404040;">Üst Konu</span>
<div class="a" style="left:1108px;top:303.3px;width:352px;height:31.5px;border:1px solid #a3bde3;background:#fff"></div>
<span id="t100" class="a t" style="letter-spacing:0.130px;left:1113.4px;top:307.34px;font-size:10.5px;line-height:13.65px;color:#3a3a3a;">Mevzuat İşleri</span>
<span id="t101" class="a t" style="left:1112.7px;top:319.53px;font-size:9.5px;line-height:12.35px;color:#999;letter-spacing:0.6px">010</span>
<svg class="a" style="left:1436.4px;top:310.8px" width="16" height="16" viewBox="0 0 16 16"><ellipse cx="8.2" cy="14.2" rx="6" ry="0.9" fill="#000" opacity="0.1"/>
<path d="M1.6,2.6 Q2.4,0.9 4.6,1.8 Q7.6,3.4 9.4,6.2 L14.6,13.8 L13.6,14 L8,7.8 Q5.4,5.4 2.6,4.6 Q1.2,4 1.6,2.6 Z" fill="#c81c24"/>
<path d="M2.2,12.4 L8.4,5.8 Q11.6,2.6 15.4,1.8 L15.2,2.4 Q12.2,4 10,7.2 L5.2,13.6 Q3.8,14.8 2.5,14 Q1.6,13.3 2.2,12.4 Z" fill="#e4141c"/>
<path d="M2.4,2.6 Q3.6,2 5.4,3" stroke="#f07078" stroke-width="0.8" fill="none"/></svg>
<span id="t102" class="a t" style="left:1109.8px;top:340.64px;font-size:11px;line-height:14.3px;color:#404040;-webkit-text-stroke:0.45px #404040;">Saklama Planı</span>
<span id="t103" class="a t" style="left:1190.0px;top:341.04px;font-size:12px;line-height:15.6px;color:#e8141c;-webkit-text-stroke:0.45px #e8141c;">*</span>
<div class="a" style="left:1109px;top:357px;width:400px;height:22.5px;border:1px solid #767676;background:#fff;border-radius:1px"></div>
<span id="t104" class="a t" style="left:1116.7px;top:362.04px;font-size:11px;line-height:14.3px;color:#111;">AİŞ (1 AY)</span>
<svg class="a" style="left:1495.5px;top:365px" width="10" height="7" viewBox="0 0 10 7"><path d="M1,1.2 L4.6,4.8 L8.2,1.2" stroke="#333" stroke-width="1.3" fill="none"/></svg>
<div class="a" style="left:1106.8px;top:397px;width:800px;height:1px;background:#d4e2f0"></div>
<div class="a" style="left:1106.8px;top:398px;width:800px;height:42px;background:#f6f9fc"></div>
<div class="a" style="left:1106.8px;top:440px;width:800px;height:1px;background:#d4e2f0"></div>
<div class="a" style="left:1444.2px;top:405.1px;width:71.2px;height:26.5px;border:1px solid #a3bde3;background:linear-gradient(#f4f8fc,#e0e9f5)"></div>
<svg class="a" style="left:1448px;top:410px" width="20" height="18" viewBox="0 0 20 18"><defs><linearGradient id="kg" x1="0" y1="0" x2="0" y2="1"><stop offset="0" stop-color="#9ce04a"/><stop offset="1" stop-color="#3ca826"/></linearGradient></defs><ellipse cx="8.2" cy="14.4" rx="5.2" ry="0.9" fill="#000" opacity="0.14"/><path d="M0.8,8.2 Q2.2,7 3.4,8 L7.2,11.4 Q10.8,5.4 15.8,1.2 Q16.2,1.4 15.8,2.2 Q11.4,7.4 8.4,13.6 Q7.4,14.4 6.4,13.4 Z" fill="url(#kg)"/></svg>
<span id="t105" class="a t" style="letter-spacing:-0.042px;left:1469.2px;top:411.44px;font-size:11px;line-height:14.3px;color:#1d3b63;">Kaydet</span>
<div class="a" style="left:1519.8px;top:405.1px;width:56px;height:26.5px;border:1px solid #a3bde3;background:linear-gradient(#f4f8fc,#e0e9f5)"></div>
<svg class="a" style="left:1523.5px;top:410px" width="17" height="17" viewBox="0 0 17 17"><circle cx="8" cy="8" r="6.2" fill="none" stroke="#b01818" stroke-width="2.6"/><path d="M3.8,3.8 L12.2,12.2" stroke="#b01818" stroke-width="2.6"/></svg>
<span id="t106" class="a t" style="letter-spacing:-0.099px;left:1545.1000000000001px;top:411.44px;font-size:11px;line-height:14.3px;color:#1d3b63;">İptal</span>
<div class="a" style="left:1900px;top:0px;width:8px;height:884px;background:#f0f0f0"></div>
<div class="a" style="left:1900px;top:0px;width:1px;height:884px;background:#fafafa"></div>
<div class="a" style="left:1901px;top:13px;width:7px;height:715px;background:#c6c6c6"></div>
<svg class="a" style="left:1904.4px;top:2.6px" width="6" height="6" viewBox="0 0 6 6"><path d="M1,5 L4.5,1.5 L8,5" stroke="#505050" stroke-width="2" fill="none"/></svg>
<svg class="a" style="left:1904.4px;top:868.4px" width="6" height="6" viewBox="0 0 6 6"><path d="M1,1 L4.5,4.5 L8,1" stroke="#505050" stroke-width="2" fill="none"/></svg>
<div class="a" style="left:0px;top:880px;width:1900px;height:1px;background:#ffffff"></div>
<div class="a" style="left:0px;top:881px;width:1900px;height:3px;background:#f0f0f0"></div>
<div class="a" style="left:14px;top:881px;width:1682px;height:3px;background:#cbcbcb"></div>
</body></html>
